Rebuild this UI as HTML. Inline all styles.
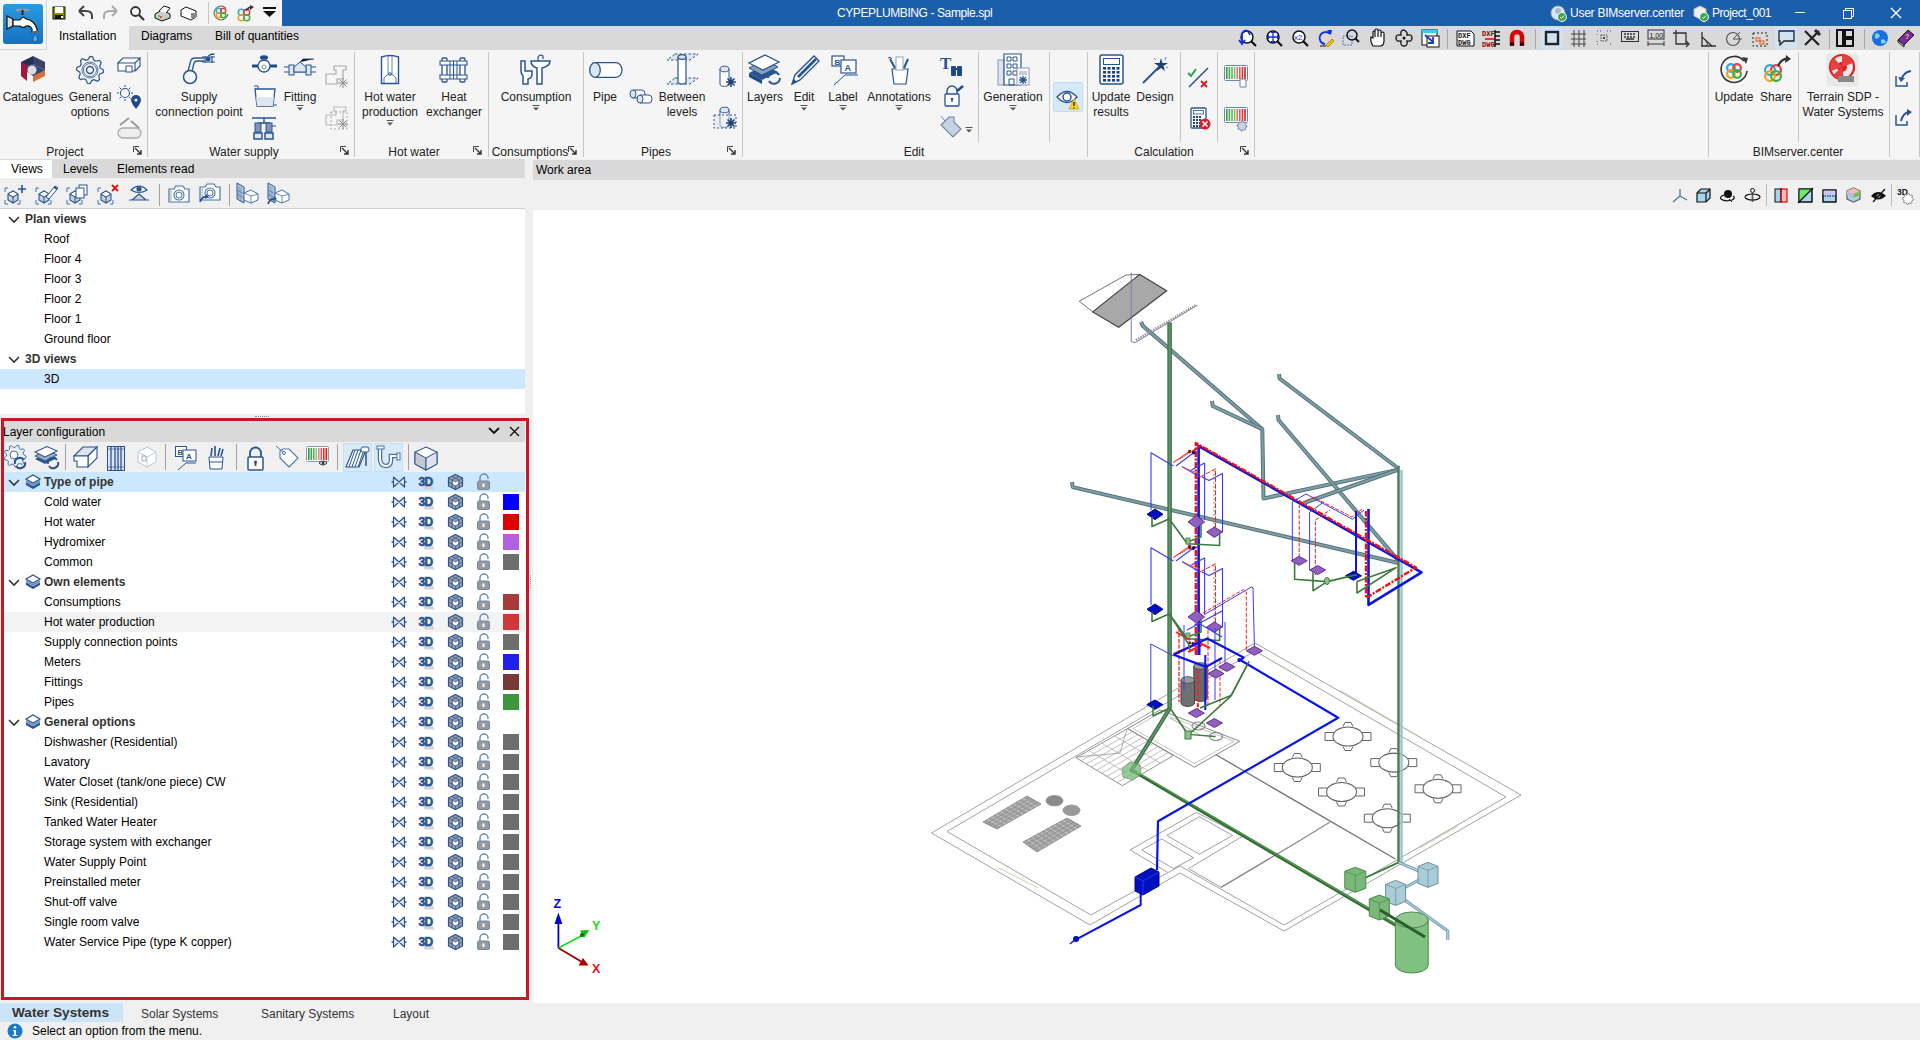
<!DOCTYPE html>
<html><head><meta charset="utf-8">
<style>
*{box-sizing:border-box;margin:0;padding:0}
html,body{width:1920px;height:1040px;overflow:hidden;background:#f0f0f0;font-family:"Liberation Sans",sans-serif;font-size:12px;color:#000}
.a{position:absolute}
.t{position:absolute;white-space:nowrap;line-height:14px}
.c{text-align:center}
svg{position:absolute;overflow:visible}
.g{color:#333}
.b{font-weight:bold}
</style></head><body>

<div class="a" style="left:0;top:0;width:1920px;height:26px;background:#1b5eab"></div>
<div class="a" style="left:0;top:0;width:282px;height:26px;background:#f5f5f5"></div>
<div class="a" style="left:0;top:0;width:47px;height:50px;background:#f5f5f5;border-right:1px solid #d4d4d4;border-bottom:1px solid #d4d4d4"></div>
<div class="t" style="left:837px;top:6px;color:#fff;font-size:12px;letter-spacing:-0.4px">CYPEPLUMBING - Sample.spl</div>
<div class="a" style="left:129px;top:26px;width:1791px;height:24px;background:#d9d9d9"></div>
<div class="a" style="left:47px;top:26px;width:82px;height:24px;background:#f5f5f5"></div>
<div class="t" style="left:59px;top:29px">Installation</div>
<div class="t" style="left:141px;top:29px">Diagrams</div>
<div class="t" style="left:215px;top:29px">Bill of quantities</div>
<div class="a" style="left:0;top:50px;width:1920px;height:109px;background:#f5f5f5"></div>

<svg style="left:3px;top:4px" width="40" height="40" viewBox="0 0 40 40"><defs><linearGradient id="ag" x1="0" y1="0" x2="0" y2="1"><stop offset="0" stop-color="#2a9be0"/><stop offset="1" stop-color="#1770c0"/></linearGradient></defs><rect x="0" y="0" width="40" height="40" rx="3" fill="url(#ag)"/><path d="M14,6 H25" stroke="#999" stroke-width="2.5" stroke-linecap="round"/><path d="M19.5,6 V11" stroke="#222" stroke-width="2"/><path d="M4,12 L10,15 V22 L4,25Z" fill="#ddd" stroke="#111" stroke-width="1.2"/><path d="M10,16 H17 Q20,11 23,15 Q31,16 34,25 V28 H29 V25 Q27,21 23,22 Q20,25 17,22 H10Z" fill="#fff" stroke="#111" stroke-width="1.2"/><path d="M29,28 H35" stroke="#666" stroke-width="2"/><path d="M32,30 Q36,35 34,37 Q32,39 30,37 Q29,35 32,30Z" fill="#4ab0e8" stroke="#105090" stroke-width="0.8"/></svg>
<svg style="left:52px;top:6px" width="14" height="14" viewBox="0 0 14 14"><rect x="0.5" y="0.5" width="13" height="13" fill="#111"/><rect x="1.5" y="1.5" width="11" height="11" fill="#8a8a00"/><rect x="3" y="1" width="8" height="6" fill="#fff"/><rect x="3" y="9" width="8" height="4" fill="#111"/><rect x="9" y="10" width="2" height="2" fill="#fff"/></svg>
<svg style="left:77px;top:5px" width="16" height="15" viewBox="0 0 16 15"><path d="M2,6 L7,1 M2,6 L7,11" stroke="#444" stroke-width="2" fill="none"/><path d="M2,6 H9 Q15,6 15,11 V14" fill="none" stroke="#444" stroke-width="2"/></svg>
<svg style="left:103px;top:5px" width="16" height="15" viewBox="0 0 16 15"><path d="M14,6 L9,1 M14,6 L9,11" stroke="#aaa" stroke-width="2" fill="none"/><path d="M14,6 H7 Q1,6 1,11 V14" fill="none" stroke="#aaa" stroke-width="2"/></svg>
<svg style="left:129px;top:5px" width="16" height="16" viewBox="0 0 16 16"><circle cx="6.5" cy="6.5" r="4.5" fill="none" stroke="#333" stroke-width="1.8"/><path d="M10,10 L15,15" stroke="#333" stroke-width="2.2"/></svg>
<svg style="left:154px;top:5px" width="17" height="16" viewBox="0 0 17 16"><path d="M1,9 L8,5 L16,9 V13 L8,16 L1,13Z" fill="#ccc" stroke="#111"/><path d="M5,6 L10,1 L16,3 L12,8" fill="#fff" stroke="#111"/><circle cx="5" cy="11" r="1" fill="#2c2"/><circle cx="7" cy="12" r="1" fill="#e22"/></svg>
<svg style="left:180px;top:6px" width="17" height="14" viewBox="0 0 17 14"><path d="M1,4 L6,1 L16,5 V11 L11,14 L1,10Z" fill="#fff" stroke="#111"/><rect x="11" y="7" width="5" height="5" fill="#888"/></svg>
<div class="a" style="left:208px;top:2px;width:1px;height:22px;background:#c6c6c6"></div>
<svg style="left:213px;top:5px" width="16" height="16" viewBox="0 0 16 16"><path d="M13,3 A7,7 0 1 0 15,9" fill="none" stroke="#555" stroke-width="1"/><circle cx="5.75" cy="5.75" r="2.5" fill="none" stroke="#2aa8e0" stroke-width="1.6"/><circle cx="10.25" cy="5.75" r="2.5" fill="none" stroke="#e04040" stroke-width="1.6"/><circle cx="5.75" cy="10.25" r="2.5" fill="none" stroke="#f0a020" stroke-width="1.6"/><circle cx="10.25" cy="10.25" r="2.5" fill="none" stroke="#40b040" stroke-width="1.6"/></svg>
<svg style="left:237px;top:5px" width="17" height="16" viewBox="0 0 17 16"><circle cx="4.3" cy="7.3" r="3.0" fill="none" stroke="#2aa8e0" stroke-width="1.6"/><circle cx="9.7" cy="7.3" r="3.0" fill="none" stroke="#e04040" stroke-width="1.6"/><circle cx="4.3" cy="12.7" r="3.0" fill="none" stroke="#f0a020" stroke-width="1.6"/><circle cx="9.7" cy="12.7" r="3.0" fill="none" stroke="#40b040" stroke-width="1.6"/><path d="M9,6 Q11,2 15,2" fill="none" stroke="#333" stroke-width="1.5"/><path d="M13,0 L17,2 L13,5Z" fill="#333"/></svg>
<svg style="left:263px;top:7px" width="13" height="10" viewBox="0 0 13 10"><rect x="0" y="0" width="13" height="2" fill="#111"/><path d="M0,4 H13 L6.5,10Z" fill="#111"/></svg>
<svg style="left:1550px;top:5px" width="17" height="17" viewBox="0 0 17 17"><circle cx="8" cy="8" r="7" fill="#dde6ee" stroke="#9ab"/><circle cx="8" cy="6" r="3" fill="#aab8c8"/><circle cx="12" cy="12" r="4.5" fill="#3aa84a" stroke="#fff"/><path d="M10,12 L11.5,13.5 L14,10.5" stroke="#fff" fill="none"/></svg>
<div class="t" style="left:1570px;top:6px;color:#fff;letter-spacing:-0.25px">User BIMserver.center</div>
<svg style="left:1692px;top:5px" width="17" height="17" viewBox="0 0 17 17"><path d="M2,4 L8,1 L14,4 V11 L8,14 L2,11Z" fill="#eee" stroke="#bbb"/><circle cx="12" cy="12" r="4.5" fill="#3aa84a" stroke="#fff"/><path d="M10,12 L11.5,13.5 L14,10.5" stroke="#fff" fill="none"/></svg>
<div class="t" style="left:1712px;top:6px;color:#fff;letter-spacing:-0.45px">Project_001</div>
<svg style="left:1795px;top:12px" width="10" height="2" viewBox="0 0 10 2"><rect width="10" height="1" fill="#fff"/></svg>
<svg style="left:1843px;top:8px" width="11" height="11" viewBox="0 0 11 11"><path d="M2.5,2.5 V0.5 H10.5 V8.5 H8.5" fill="none" stroke="#fff"/><rect x="0.5" y="2.5" width="8" height="8" fill="none" stroke="#fff"/></svg>
<svg style="left:1890px;top:7px" width="12" height="12" viewBox="0 0 12 12"><path d="M1,1 L11,11 M11,1 L1,11" stroke="#fff" stroke-width="1.4"/></svg>
<div class="a" style="left:1447px;top:29px;width:1px;height:20px;background:#a8a8a8"></div>
<div class="a" style="left:1535px;top:29px;width:1px;height:20px;background:#a8a8a8"></div>
<div class="a" style="left:1829px;top:29px;width:1px;height:20px;background:#a8a8a8"></div>
<div class="a" style="left:1864px;top:29px;width:1px;height:20px;background:#a8a8a8"></div>
<div class="a" style="left:1541px;top:27px;width:22px;height:22px;background:#cfe3f3;border-radius:2px"></div>
<div class="a" style="left:1775px;top:27px;width:22px;height:22px;background:#cfe3f3;border-radius:2px"></div>
<svg style="left:1239px;top:29px" width="18" height="18" viewBox="0 0 18 18"><circle cx="8" cy="8" r="6" fill="#fff" stroke="#111" stroke-width="1.5"/><path d="M12,12 L17,17" stroke="#111" stroke-width="2.2"/><path d="M3,4 Q8,-2 11,6 M3,4 V14 M0,11 L3,15 L6,11" fill="none" stroke="#1030e0" stroke-width="1.8"/></svg>
<svg style="left:1265px;top:29px" width="18" height="18" viewBox="0 0 18 18"><circle cx="8" cy="8" r="6" fill="#fff" stroke="#111" stroke-width="1.5"/><path d="M12,12 L17,17" stroke="#111" stroke-width="2.2"/><path d="M8,3 V13 M3,8 H13" stroke="#1030e0" stroke-width="1.3"/><path d="M6,4 L8,2 L10,4 M6,12 L8,14 L10,12 M4,6 L2,8 L4,10 M12,6 L14,8 L12,10" fill="#1030e0" stroke="#1030e0"/></svg>
<svg style="left:1291px;top:29px" width="18" height="18" viewBox="0 0 18 18"><circle cx="8" cy="8" r="6" fill="#fff" stroke="#111" stroke-width="1.5"/><path d="M12,12 L17,17" stroke="#111" stroke-width="2.2"/><text x="3" y="11" font-size="8" fill="#1030e0" font-family="Liberation Sans">x2</text></svg>
<svg style="left:1316px;top:29px" width="18" height="18" viewBox="0 0 18 18"><path d="M14,5 A6,6 0 1 0 9,15" fill="none" stroke="#1030e0" stroke-width="1.8"/><path d="M11,1 L16,1 L15,6Z" fill="#1030e0"/><path d="M10,16 L16,10 L18,12 L12,18Z" fill="#f0c020" stroke="#b80"/><path d="M4,17 H10" stroke="#111"/></svg>
<svg style="left:1342px;top:29px" width="18" height="18" viewBox="0 0 18 18"><rect x="1" y="7" width="9" height="9" fill="none" stroke="#3050e0" stroke-dasharray="1.5,1.5"/><circle cx="10" cy="6" r="5" fill="none" stroke="#111" stroke-width="1.5"/><path d="M13,9 L17,13" stroke="#111" stroke-width="2"/></svg>
<svg style="left:1369px;top:29px" width="17" height="18" viewBox="0 0 17 18"><path d="M4,17 Q1,12 2,8 L4,9 V3 Q5,1 6,3 V8 V1 Q7.5,-1 9,1 V8 V2 Q10.5,0 12,2 V8 V4 Q13.5,2 15,4 V12 Q15,17 11,17Z" fill="#fff" stroke="#111" stroke-width="1.2"/></svg>
<svg style="left:1395px;top:29px" width="18" height="18" viewBox="0 0 18 18"><path d="M9,1 Q13,3 12,6 Q17,5 17,9 Q17,13 12,12 Q13,17 9,17 Q5,17 6,12 Q1,13 1,9 Q1,5 6,6 Q5,1 9,1Z" fill="none" stroke="#111" stroke-width="1.3"/><circle cx="9" cy="9" r="1.5" fill="#111"/></svg>
<svg style="left:1421px;top:29px" width="19" height="19" viewBox="0 0 19 19"><rect x="1" y="1" width="15" height="15" fill="#fff" stroke="#111"/><rect x="1" y="1" width="15" height="3" fill="#30d0f0"/><rect x="6" y="7" width="12" height="11" fill="#fff" stroke="#111"/><path d="M4,6 L12,13 M12,8 V14 H7" fill="none" stroke="#1040c0" stroke-width="1.8"/></svg>
<svg style="left:1456px;top:30px" width="19" height="17" viewBox="0 0 19 17"><path d="M1,1 H15 L18,4 V16 H1Z" fill="#fff" stroke="#111"/><text x="2" y="8" font-size="7" font-weight="bold" font-family="Liberation Mono" fill="#111">DXF</text><text x="2" y="15" font-size="7" font-weight="bold" font-family="Liberation Mono" fill="#111">DWG</text></svg>
<svg style="left:1482px;top:29px" width="19" height="19" viewBox="0 0 19 19"><text x="0" y="7" font-size="7" font-weight="bold" font-family="Liberation Mono" fill="#900">DXF</text><text x="0" y="18" font-size="7" font-weight="bold" font-family="Liberation Mono" fill="#900">DWG</text><path d="M3,10 H12" stroke="#e00" stroke-width="1.5"/><path d="M13,1 V18 M13,3 H18 M13,7 H18 M13,11 H18 M13,15 H18" stroke="#111" stroke-width="1.5"/></svg>
<svg style="left:1509px;top:29px" width="16" height="19" viewBox="0 0 16 19"><path d="M3,17 V8 a5,5 0 0 1 10,0 V17" fill="none" stroke="#d00" stroke-width="4.5"/><path d="M1,15 H5 M11,15 H15" stroke="#111" stroke-width="3"/></svg>
<svg style="left:1544px;top:30px" width="16" height="16" viewBox="0 0 16 16"><rect x="2" y="2" width="12" height="12" fill="none" stroke="#222" stroke-width="2.4"/></svg>
<svg style="left:1570px;top:29px" width="17" height="18" viewBox="0 0 17 18"><path d="M1,5 H16 M1,10 H16 M1,15 H16 M4,1 V18 M9,1 V18 M14,1 V18" stroke="#444" stroke-width="1"/></svg>
<svg style="left:1596px;top:30px" width="16" height="16" viewBox="0 0 16 16"><path d="M1,1h1M14,1h1M1,14h1M14,14h1M4,1h1M11,1h1M1,4v1M1,11v1" stroke="#555"/><rect x="5" y="5" width="6" height="6" fill="none" stroke="#444" stroke-dasharray="1.5,1"/><circle cx="8" cy="8" r="1" fill="#111"/></svg>
<svg style="left:1621px;top:31px" width="18" height="12" viewBox="0 0 18 12"><rect x="0.5" y="0.5" width="17" height="10" fill="none" stroke="#333"/><path d="M3,3h2M6,3h2M9,3h2M12,3h2M3,6h2M6,6h2M9,6h2M12,6h2M5,8h8" stroke="#333" stroke-width="1.3"/></svg>
<svg style="left:1647px;top:29px" width="18" height="18" viewBox="0 0 18 18"><rect x="1" y="1" width="16" height="9" fill="none" stroke="#333"/><text x="2.5" y="8.5" font-size="7" font-family="Liberation Sans" fill="#111">1.00</text><path d="M1,15 H17 M1,12 V17 M17,12 V17" stroke="#333"/></svg>
<svg style="left:1672px;top:29px" width="19" height="19" viewBox="0 0 19 19"><path d="M4,1 V15 H16 M1,4 H4 M14,12 L17,15 L14,18" fill="none" stroke="#333" stroke-width="1.3"/><path d="M4,4 H14 V15" fill="none" stroke="#333" stroke-width="1.3"/></svg>
<svg style="left:1699px;top:29px" width="18" height="18" viewBox="0 0 18 18"><path d="M2,17 H17 M3,3 V17 M3,8 L13,17" stroke="#333" stroke-width="1.3"/><path d="M8,17 A5,5 0 0 0 7,12" fill="none" stroke="#333"/></svg>
<svg style="left:1725px;top:29px" width="18" height="18" viewBox="0 0 18 18"><circle cx="8" cy="10" r="6.5" fill="none" stroke="#555" stroke-width="1.2"/><path d="M8,10 L15,3 M8,10 H17" stroke="#555"/></svg>
<svg style="left:1751px;top:29px" width="19" height="19" viewBox="0 0 19 19"><rect x="2" y="4" width="14" height="13" fill="none" stroke="#222" stroke-dasharray="2,2"/><rect x="5" y="9" width="4" height="3" fill="none" stroke="#e05a10"/><rect x="9" y="12" width="4" height="3" fill="none" stroke="#e05a10"/></svg>
<svg style="left:1778px;top:30px" width="17" height="16" viewBox="0 0 17 16"><path d="M1,1 H16 V11 H6 L2,15 V11 H1Z" fill="none" stroke="#222" stroke-width="1.3"/></svg>
<svg style="left:1803px;top:29px" width="18" height="18" viewBox="0 0 18 18"><path d="M2,16 L16,2 M2,2 L16,16" stroke="#222" stroke-width="2.2"/><path d="M12,1 L17,6" stroke="#222" stroke-width="3"/></svg>
<svg style="left:1836px;top:29px" width="18" height="18" viewBox="0 0 18 18"><rect x="1" y="1" width="6" height="16" fill="none" stroke="#111" stroke-width="2"/><rect x="9" y="1" width="8" height="7" fill="none" stroke="#111" stroke-width="2"/><rect x="9" y="10" width="8" height="7" fill="none" stroke="#111" stroke-width="2"/></svg>
<svg style="left:1871px;top:29px" width="18" height="18" viewBox="0 0 18 18"><circle cx="9" cy="9" r="8" fill="#1a6fe0"/><path d="M4,5 Q8,3 9,7 Q7,11 4,9Z M10,11 Q14,9 15,13 Q12,16 10,14Z" fill="#7fd0ff"/></svg>
<svg style="left:1897px;top:29px" width="18" height="18" viewBox="0 0 18 18"><path d="M1,11 L11,1 L17,6 L7,16Z" fill="#7a2aa0" stroke="#111"/><path d="M1,11 L7,16 V18 L1,13Z" fill="#ddd" stroke="#111"/><text x="8" y="10" font-size="7" font-weight="bold" fill="#f0d030" font-family="Liberation Sans">?</text></svg>
<div class="a" style="left:147px;top:52px;width:1px;height:105px;background:#c6c6c6"></div>
<div class="a" style="left:354px;top:52px;width:1px;height:105px;background:#c6c6c6"></div>
<div class="a" style="left:488px;top:52px;width:1px;height:105px;background:#c6c6c6"></div>
<div class="a" style="left:583px;top:52px;width:1px;height:105px;background:#c6c6c6"></div>
<div class="a" style="left:742px;top:52px;width:1px;height:105px;background:#c6c6c6"></div>
<div class="a" style="left:1087px;top:52px;width:1px;height:105px;background:#c6c6c6"></div>
<div class="a" style="left:1254px;top:52px;width:1px;height:105px;background:#c6c6c6"></div>
<div class="a" style="left:1708px;top:52px;width:1px;height:105px;background:#c6c6c6"></div>
<div class="a" style="left:1889px;top:52px;width:1px;height:105px;background:#c6c6c6"></div>
<div class="a" style="left:1919px;top:52px;width:1px;height:105px;background:#c6c6c6"></div>
<div class="a" style="left:978px;top:52px;width:1px;height:90px;background:#c6c6c6"></div>
<div class="a" style="left:1049px;top:52px;width:1px;height:90px;background:#c6c6c6"></div>
<div class="a" style="left:1180px;top:52px;width:1px;height:90px;background:#c6c6c6"></div>
<div class="a" style="left:1217px;top:52px;width:1px;height:90px;background:#c6c6c6"></div>
<div class="a" style="left:1798px;top:52px;width:1px;height:90px;background:#c6c6c6"></div>
<div class="t c" style="left:-35px;top:145px;width:200px;color:#222;">Project</div>
<div class="t c" style="left:144px;top:145px;width:200px;color:#222;">Water supply</div>
<div class="t c" style="left:314px;top:145px;width:200px;color:#222;">Hot water</div>
<div class="t c" style="left:430px;top:145px;width:200px;color:#222;">Consumptions</div>
<div class="t c" style="left:556px;top:145px;width:200px;color:#222;">Pipes</div>
<div class="t c" style="left:814px;top:145px;width:200px;color:#222;">Edit</div>
<div class="t c" style="left:1064px;top:145px;width:200px;color:#222;">Calculation</div>
<div class="t c" style="left:1698px;top:145px;width:200px;color:#222;">BIMserver.center</div>
<svg style="left:133px;top:146px" width="9" height="9" viewBox="0 0 9 9"><path d="M0.5,6 V0.5 H6" fill="none" stroke="#444"/><path d="M2,2 L7.5,7.5 M4,8 H8 V4" fill="none" stroke="#333" stroke-width="1.4"/></svg>
<svg style="left:340px;top:146px" width="9" height="9" viewBox="0 0 9 9"><path d="M0.5,6 V0.5 H6" fill="none" stroke="#444"/><path d="M2,2 L7.5,7.5 M4,8 H8 V4" fill="none" stroke="#333" stroke-width="1.4"/></svg>
<svg style="left:473px;top:146px" width="9" height="9" viewBox="0 0 9 9"><path d="M0.5,6 V0.5 H6" fill="none" stroke="#444"/><path d="M2,2 L7.5,7.5 M4,8 H8 V4" fill="none" stroke="#333" stroke-width="1.4"/></svg>
<svg style="left:568px;top:146px" width="9" height="9" viewBox="0 0 9 9"><path d="M0.5,6 V0.5 H6" fill="none" stroke="#444"/><path d="M2,2 L7.5,7.5 M4,8 H8 V4" fill="none" stroke="#333" stroke-width="1.4"/></svg>
<svg style="left:727px;top:146px" width="9" height="9" viewBox="0 0 9 9"><path d="M0.5,6 V0.5 H6" fill="none" stroke="#444"/><path d="M2,2 L7.5,7.5 M4,8 H8 V4" fill="none" stroke="#333" stroke-width="1.4"/></svg>
<svg style="left:1240px;top:146px" width="9" height="9" viewBox="0 0 9 9"><path d="M0.5,6 V0.5 H6" fill="none" stroke="#444"/><path d="M2,2 L7.5,7.5 M4,8 H8 V4" fill="none" stroke="#333" stroke-width="1.4"/></svg>
<div class="t c" style="left:-67px;top:90px;width:200px;color:#222;">Catalogues</div>
<div class="t c" style="left:-10px;top:90px;width:200px;color:#222;">General</div>
<div class="t c" style="left:-10px;top:105px;width:200px;color:#222;">options</div>
<div class="t c" style="left:99px;top:90px;width:200px;color:#222;">Supply</div>
<div class="t c" style="left:99px;top:105px;width:200px;color:#222;">connection point</div>
<div class="t c" style="left:200px;top:90px;width:200px;color:#222;">Fitting</div>
<div class="t c" style="left:290px;top:90px;width:200px;color:#222;">Hot water</div>
<div class="t c" style="left:290px;top:105px;width:200px;color:#222;">production</div>
<div class="t c" style="left:354px;top:90px;width:200px;color:#222;">Heat</div>
<div class="t c" style="left:354px;top:105px;width:200px;color:#222;">exchanger</div>
<div class="t c" style="left:436px;top:90px;width:200px;color:#222;">Consumption</div>
<div class="t c" style="left:505px;top:90px;width:200px;color:#222;">Pipe</div>
<div class="t c" style="left:582px;top:90px;width:200px;color:#222;">Between</div>
<div class="t c" style="left:582px;top:105px;width:200px;color:#222;">levels</div>
<div class="t c" style="left:665px;top:90px;width:200px;color:#222;">Layers</div>
<div class="t c" style="left:704px;top:90px;width:200px;color:#222;">Edit</div>
<div class="t c" style="left:743px;top:90px;width:200px;color:#222;">Label</div>
<div class="t c" style="left:799px;top:90px;width:200px;color:#222;">Annotations</div>
<div class="t c" style="left:913px;top:90px;width:200px;color:#222;">Generation</div>
<div class="t c" style="left:1011px;top:90px;width:200px;color:#222;">Update</div>
<div class="t c" style="left:1011px;top:105px;width:200px;color:#222;">results</div>
<div class="t c" style="left:1055px;top:90px;width:200px;color:#222;">Design</div>
<div class="t c" style="left:1634px;top:90px;width:200px;color:#222;">Update</div>
<div class="t c" style="left:1676px;top:90px;width:200px;color:#222;">Share</div>
<div class="t c" style="left:1743px;top:90px;width:200px;color:#222;">Terrain SDP -</div>
<div class="t c" style="left:1743px;top:105px;width:200px;color:#222;">Water Systems</div>
<svg style="left:296px;top:105px" width="8" height="6" viewBox="0 0 8 6"><path d="M0.5,0.5 H7.5" stroke="#555" stroke-width="1"/><path d="M1,2.5 H7 L4,5.5 Z" fill="#555"/></svg>
<svg style="left:386px;top:120px" width="8" height="6" viewBox="0 0 8 6"><path d="M0.5,0.5 H7.5" stroke="#555" stroke-width="1"/><path d="M1,2.5 H7 L4,5.5 Z" fill="#555"/></svg>
<svg style="left:532px;top:105px" width="8" height="6" viewBox="0 0 8 6"><path d="M0.5,0.5 H7.5" stroke="#555" stroke-width="1"/><path d="M1,2.5 H7 L4,5.5 Z" fill="#555"/></svg>
<svg style="left:800px;top:105px" width="8" height="6" viewBox="0 0 8 6"><path d="M0.5,0.5 H7.5" stroke="#555" stroke-width="1"/><path d="M1,2.5 H7 L4,5.5 Z" fill="#555"/></svg>
<svg style="left:839px;top:105px" width="8" height="6" viewBox="0 0 8 6"><path d="M0.5,0.5 H7.5" stroke="#555" stroke-width="1"/><path d="M1,2.5 H7 L4,5.5 Z" fill="#555"/></svg>
<svg style="left:895px;top:105px" width="8" height="6" viewBox="0 0 8 6"><path d="M0.5,0.5 H7.5" stroke="#555" stroke-width="1"/><path d="M1,2.5 H7 L4,5.5 Z" fill="#555"/></svg>
<svg style="left:1009px;top:105px" width="8" height="6" viewBox="0 0 8 6"><path d="M0.5,0.5 H7.5" stroke="#555" stroke-width="1"/><path d="M1,2.5 H7 L4,5.5 Z" fill="#555"/></svg>
<svg style="left:965px;top:127px" width="8" height="6" viewBox="0 0 8 6"><path d="M0.5,0.5 H7.5" stroke="#555" stroke-width="1"/><path d="M1,2.5 H7 L4,5.5 Z" fill="#555"/></svg>
<svg style="left:20px;top:55px" width="26" height="28" viewBox="0 0 26 28"><path d="M13,1 L25,7 V15 L13,9 Z" fill="#39436a"/><path d="M1,7 L13,1 V9 L7,12 V24 Z" fill="#233156"/><path d="M1,7 L7,10 V26 L1,21 Z" fill="#a3163c"/><path d="M13,13 L25,15 V21 L13,27 Z" fill="#d9703c"/><path d="M7,10 L13,9 L25,15 L13,21 L7,17 Z" fill="#2f4a78"/><circle cx="12" cy="15" r="4.5" fill="#ddd"/></svg>
<svg style="left:74px;top:54px" width="32" height="32" viewBox="0 0 32 32"><polygon points="29.50,16.00 29.24,18.63 25.73,20.03 24.76,21.85 25.55,25.55 23.50,27.22 20.03,25.73 18.05,26.33 16.00,29.50 13.37,29.24 11.97,25.73 10.15,24.76 6.45,25.55 4.78,23.50 6.27,20.03 5.67,18.05 2.50,16.00 2.76,13.37 6.27,11.97 7.24,10.15 6.45,6.45 8.50,4.78 11.97,6.27 13.95,5.67 16.00,2.50 18.63,2.76 20.03,6.27 21.85,7.24 25.55,6.45 27.22,8.50 25.73,11.97 26.33,13.95" fill="#f5f5f5" stroke="#2a5490" stroke-width="1.2"/><circle cx="16" cy="16" r="8" fill="none" stroke="#2a5490" stroke-width="0.8"/><circle cx="16" cy="16" r="6.5" fill="none" stroke="#2a5490" stroke-width="0.8"/><circle cx="16" cy="16" r="3.5" fill="none" stroke="#2a5490" stroke-width="1.4"/></svg>
<svg style="left:117px;top:57px" width="24" height="17" viewBox="0 0 24 17"><path d="M1,6 L6,1 H23 L18,6 Z M1,6 H18 V14 H1 Z M18,6 L23,1 V9 L18,14" fill="#fff" stroke="#2a5490" stroke-width="1.1"/><rect x="9" y="9" width="6" height="6" fill="#fff" stroke="#2a5490"/></svg>
<svg style="left:117px;top:85px" width="25" height="24" viewBox="0 0 25 24"><circle cx="8" cy="8" r="4.5" fill="none" stroke="#2a5490" stroke-width="1.1"/><path d="M8,0 V2 M8,14 V16 M0,8 H2 M14,8 H16 M2.5,2.5 L4,4 M12,12 L13.5,13.5 M2.5,13.5 L4,12 M12,4 L13.5,2.5" stroke="#2a5490"/><path d="M19,10 a5,5 0 0 1 5,5 c0,3 -5,9 -5,9 c0,0 -5,-6 -5,-9 a5,5 0 0 1 5,-5Z" fill="#1f4a8a"/><circle cx="19" cy="15" r="1.6" fill="#fff"/></svg>
<svg style="left:117px;top:117px" width="24" height="22" viewBox="0 0 24 22"><path d="M1,16 a5,5 0 0 1 5,-5 H19 a5,5 0 0 1 0,10 H6 a5,5 0 0 1 -5,-5Z" fill="#eee" stroke="#aaa" stroke-width="1.3"/><path d="M3,8 L12,1 M14,4 L22,11" stroke="#999" stroke-width="2"/></svg>
<svg style="left:182px;top:54px" width="34" height="31" viewBox="0 0 34 31"><circle cx="8" cy="23" r="6.5" fill="#f5f5f5" stroke="#2a5490" stroke-width="1.5"/><path d="M6,17 L9,6 Q10,4 13,4 H22 M10,17 L12,9 Q13,7 15,7 H22" fill="none" stroke="#2a5490" stroke-width="1.3"/><path d="M20,3 H33 M20,8 H33 M23,2 V9 M30,2 V9" stroke="#2a5490" stroke-width="1.2"/><circle cx="26" cy="5" r="2.5" fill="#2a5490"/><path d="M26,2 L29,0 H33" stroke="#2a5490"/></svg>
<svg style="left:252px;top:55px" width="25" height="18" viewBox="0 0 25 18"><ellipse cx="12" cy="2.5" rx="4" ry="2.3" fill="#1f4a8a"/><path d="M12,5 V7" stroke="#2a5490"/><path d="M0,11 H25" stroke="#1f4a8a" stroke-width="3"/><circle cx="12" cy="11" r="6" fill="#fff" stroke="#2a5490" stroke-width="1.3"/><circle cx="12" cy="12" r="2" fill="none" stroke="#2a5490" stroke-width="0.6"/></svg>
<svg style="left:253px;top:85px" width="24" height="23" viewBox="0 0 24 23"><path d="M1,1 H5 V4" fill="none" stroke="#2a5490"/><path d="M2,4 H22 L20,21 H4 Z" fill="#fff" stroke="#2a5490" stroke-width="1.3"/><path d="M3,12 H21 L20,21 H4 Z" fill="#dde5ef"/><path d="M20,20 H24" stroke="#2a5490"/></svg>
<svg style="left:252px;top:117px" width="24" height="22" viewBox="0 0 24 22"><path d="M0,1 H24 M12,1 V6 M6,6 H18" stroke="#2a5490" stroke-width="1.5"/><rect x="3" y="6" width="6" height="9" fill="#7c95b8" stroke="#2a5490"/><rect x="14" y="6" width="6" height="9" fill="#7c95b8" stroke="#2a5490"/><path d="M20,9 H24" stroke="#2a5490"/><rect x="2" y="16" width="8" height="6" fill="#dde5ef" stroke="#2a5490" stroke-width="1.5"/><rect x="13" y="16" width="8" height="6" fill="#dde5ef" stroke="#2a5490" stroke-width="1.5"/></svg>
<svg style="left:284px;top:59px" width="32" height="17" viewBox="0 0 32 17"><path d="M0,8 H32 M0,13 H32" stroke="#2a5490" stroke-width="1.2"/><rect x="5" y="6" width="5" height="10" fill="#dde5ef" stroke="#2a5490"/><rect x="22" y="6" width="5" height="10" fill="#dde5ef" stroke="#2a5490"/><path d="M10,8 L16,3 L22,8 V13 H10 Z" fill="#dde5ef" stroke="#2a5490"/><path d="M16,3 L19,0 H30" stroke="#2a5490"/></svg>
<svg style="left:324px;top:65px" width="24" height="24" viewBox="0 0 24 24"><path d="M10,1 H22 V5 H19 V14 H13 V19 H2 V9 H12 V5 H10Z" fill="#f5f5f5" stroke="#aaa" stroke-width="1.2"/><path d="M19,13 L19,23 M14,18 H24 M15.5,14.5 L22.5,21.5 M22.5,14.5 L15.5,21.5" stroke="#888"/></svg>
<svg style="left:324px;top:106px" width="24" height="24" viewBox="0 0 24 24"><path d="M10,1 H22 V5 H19 V14 H13 V19 H2 V9 H12 V5 H10Z" fill="#f5f5f5" stroke="#bbb" stroke-width="1.2"/><rect x="7" y="6" width="16" height="17" fill="none" stroke="#aaa" stroke-dasharray="2,2"/><path d="M19,13 L19,23 M14,18 H24 M15.5,14.5 L22.5,21.5 M22.5,14.5 L15.5,21.5" stroke="#888"/></svg>
<svg style="left:380px;top:54px" width="20" height="31" viewBox="0 0 20 31"><path d="M1.5,3 Q10,0 18.5,3 V29.5 H1.5 Z" fill="#fff" stroke="#2a5490" stroke-width="1.4"/><path d="M8,2 V20 M12,2 V20" stroke="#2a5490" stroke-width="0.7"/><path d="M4,29 V24 Q10,16 16,24 V29" fill="none" stroke="#2a5490" stroke-width="0.8"/><circle cx="10" cy="20" r="1.5" fill="none" stroke="#2a5490" stroke-width="0.7"/></svg>
<svg style="left:440px;top:57px" width="28" height="26" viewBox="0 0 28 26"><rect x="2" y="1" width="5" height="24" rx="1" fill="#fff" stroke="#2a5490" stroke-width="1.3"/><rect x="20" y="1" width="5" height="24" rx="1" fill="#fff" stroke="#2a5490" stroke-width="1.3"/><path d="M0,4 H27 V8 H0 Z M0,18 H27 V22 H0Z" fill="#fff" stroke="#2a5490" stroke-width="1.1"/><path d="M10,4 V22 M13.5,4 V22 M17,4 V22" stroke="#2a5490" stroke-width="1"/></svg>
<svg style="left:520px;top:54px" width="31" height="31" viewBox="0 0 31 31"><path d="M1,7 H5 V17 H12 V20 Q12,24 8,25 V30 H3 V22 Q1,20 1,17 Z" fill="#fff" stroke="#2a5490" stroke-width="1.5"/><path d="M11,7 H30 Q30,12 22,14 V30 H17 V14 Q11,12 11,7Z" fill="#fff" stroke="#2a5490" stroke-width="1.5"/><path d="M18,7 V3 Q20,0 23,2 V5" fill="none" stroke="#2a5490" stroke-width="1.2"/></svg>
<svg style="left:589px;top:62px" width="34" height="16" viewBox="0 0 34 16"><path d="M6,0.7 H27 A6,7.3 0 0 1 27,15.3 H6" fill="#fff" stroke="#2a5490" stroke-width="1.3"/><ellipse cx="6" cy="8" rx="5.3" ry="7.3" fill="#dde5ef" stroke="#2a5490" stroke-width="1.3"/></svg>
<svg style="left:629px;top:89px" width="25" height="15" viewBox="0 0 25 15"><path d="M4,1 H13 A3,4 0 0 1 13,9 H4" fill="#fff" stroke="#2a5490"/><ellipse cx="4" cy="5" rx="3" ry="4" fill="#dde5ef" stroke="#2a5490"/><path d="M11,6 H20 A3,4 0 0 1 20,14 H11" fill="#fff" stroke="#2a5490"/><ellipse cx="11" cy="10" rx="3" ry="4" fill="#dde5ef" stroke="#2a5490"/></svg>
<svg style="left:666px;top:53px" width="33" height="34" viewBox="0 0 33 34"><path d="M9,1 H32 L24,7 H1 Z" fill="#dde5ef" stroke="#2a5490" stroke-dasharray="2.5,2"/><path d="M9,25 H32 L24,31 H1 Z" fill="#dde5ef" stroke="#2a5490" stroke-dasharray="2.5,2"/><path d="M12,4 V29 A4,2 0 0 0 20,29 V4" fill="#fff" stroke="#2a5490" stroke-width="1.2"/><ellipse cx="16" cy="4" rx="4" ry="2.3" fill="#dde5ef" stroke="#2a5490" stroke-width="1.2"/></svg>
<svg style="left:718px;top:65px" width="18" height="24" viewBox="0 0 18 24"><path d="M2,4 V19 A4.5,2.3 0 0 0 11,19 V4" fill="#fff" stroke="#2a5490"/><ellipse cx="6.5" cy="4" rx="4.5" ry="2.8" fill="#dde5ef" stroke="#2a5490"/><path d="M13,12 V22 M8,17 H18 M9.5,13.5 L16.5,20.5 M16.5,13.5 L9.5,20.5" stroke="#1f3f7a" stroke-width="1.6"/></svg>
<svg style="left:718px;top:106px" width="18" height="24" viewBox="0 0 18 24"><path d="M2,4 V19 A4.5,2.3 0 0 0 11,19 V4" fill="#fff" stroke="#2a5490"/><ellipse cx="6.5" cy="4" rx="4.5" ry="2.8" fill="#dde5ef" stroke="#2a5490"/><rect x="-4" y="9" width="22" height="13" fill="#dde5ef" fill-opacity="0.5" stroke="#2a5490" stroke-dasharray="2,2"/><path d="M13,12 V22 M8,17 H18 M9.5,13.5 L16.5,20.5 M16.5,13.5 L9.5,20.5" stroke="#1f3f7a" stroke-width="1.6"/></svg>
<svg style="left:748px;top:54px" width="33" height="32" viewBox="0 0 33 32"><path d="M1,19 L14,26 L30,18 L17,11 Z" fill="#2a5490"/><path d="M1,14 L14,21 L30,13 L17,6 Z" fill="#8a9dba" stroke="#2a5490"/><path d="M1,9 L15,16 L31,8 L17,1 Z" fill="#fff" stroke="#2a5490" stroke-width="1.3"/><path d="M1,19 V23 L14,30 V26" fill="#1f4a8a"/><path d="M20,24 a6,6 0 0 1 11,-3 M32,24 a6,6 0 0 1 -11,3" fill="none" stroke="#2a5490" stroke-width="2"/></svg>
<svg style="left:790px;top:55px" width="30" height="31" viewBox="0 0 30 31"><path d="M2,29 L5,20 L24,1 L29,6 L10,25 Z" fill="#fff" stroke="#2a5490" stroke-width="1.4"/><path d="M7,21 L25,3 L27,5 L9,23Z" fill="#2a5490"/><path d="M2,29 L4,24 L7,27Z" fill="#2a5490"/></svg>
<svg style="left:831px;top:55px" width="27" height="31" viewBox="0 0 27 31"><rect x="1" y="1" width="12" height="10" fill="#fff" stroke="#2a5490" stroke-width="1.2"/><rect x="10" y="5" width="15" height="13" fill="#fff" stroke="#2a5490" stroke-width="1.2"/><text x="3.5" y="9.5" font-size="8" font-weight="bold" fill="#2a5490" font-family="Liberation Sans">B</text><text x="13.5" y="15.5" font-size="9" font-weight="bold" fill="#2a5490" font-family="Liberation Sans">A</text><path d="M27,20 H14 L3,30" fill="none" stroke="#2a5490"/></svg>
<svg style="left:886px;top:56px" width="26" height="29" viewBox="0 0 26 29"><path d="M6,13 H22 L20,28 H8 Z" fill="#fff" stroke="#2a5490" stroke-width="1.2"/><rect x="10" y="1" width="7" height="13" fill="#fff" stroke="#8aa"/><path d="M4,3 L9,12 M22,3 L18,12" stroke="#2a5490" stroke-width="2"/><path d="M2,2 Q4,0 6,3" fill="none" stroke="#2a5490"/></svg>
<svg style="left:940px;top:55px" width="24" height="23" viewBox="0 0 24 23"><text x="0" y="14" font-size="17" font-family="Liberation Serif" fill="#2a5490" font-weight="bold">T</text><rect x="11" y="11" width="5" height="10" rx="1" fill="#1f4a8a"/><rect x="17" y="11" width="5" height="10" rx="1" fill="#1f4a8a"/><path d="M15,14 H18" stroke="#1f4a8a" stroke-width="2"/></svg>
<svg style="left:944px;top:85px" width="20" height="23" viewBox="0 0 20 23"><path d="M3,9 V6 a5,5 0 0 1 10,0 V9" fill="none" stroke="#2a5490" stroke-width="1.4"/><rect x="1" y="9" width="14" height="12" rx="1" fill="#fff" stroke="#2a5490" stroke-width="1.3"/><circle cx="8" cy="14" r="1.3" fill="#2a5490"/><path d="M8,14 V17" stroke="#2a5490" stroke-width="1.3"/><path d="M13,6 L19,1" stroke="#1f4a8a" stroke-width="2.5"/></svg>
<svg style="left:940px;top:116px" width="22" height="23" viewBox="0 0 22 23"><path d="M1,9 L9,1 H14 V6 L21,13 L13,21 Z" transform="rotate(0)" fill="#c9d2e0" stroke="#6d86aa" stroke-width="1.1"/><path d="M1,0 L5,5" stroke="#6d86aa"/></svg>
<svg style="left:997px;top:53px" width="33" height="33" viewBox="0 0 33 33"><rect x="1" y="7" width="6" height="25" fill="#dfe4ec" stroke="#8a9ab5"/><path d="M7,1 H24 V32 H7Z" fill="#fff" stroke="#2a5490" stroke-width="1.2"/><path d="M10,4 h4 v4 h-4z M16,4 h4 v4 h-4z M10,11 h4 v4 h-4z M16,11 h4 v4 h-4z M10,18 h4 v4 h-4z M16,18 h4 v4 h-4z M12,26 h5 v6 h-5z" fill="none" stroke="#2a5490"/><rect x="20" y="15" width="12" height="17" fill="#fff" stroke="#8a9ab5"/><path d="M22,19 H30 M22,21 H30" stroke="#8a9ab5"/><path d="M26,23 V31 M22,27 H30 M23,24 L29,30 M29,24 L23,30" stroke="#2a5490" stroke-width="1.3"/></svg>
<div class="a" style="left:1053px;top:82px;width:30px;height:30px;background:#d7e9f7;border:1px solid #c0dcf2;border-radius:2px"></div>
<svg style="left:1056px;top:88px" width="24" height="22" viewBox="0 0 24 22"><path d="M1,9 Q11,-2 21,9 Q11,20 1,9Z" fill="#fff" stroke="#2a5490" stroke-width="1.3"/><circle cx="11" cy="9" r="4" fill="none" stroke="#2a5490" stroke-width="1.5"/><path d="M13,21 L18,11 L23,21Z" fill="#f6d43a" stroke="#e0b000"/><path d="M18,14 V18 M18,19.5 V20.5" stroke="#222" stroke-width="1.4"/></svg>
<svg style="left:1099px;top:54px" width="25" height="31" viewBox="0 0 25 31"><rect x="1" y="1" width="23" height="29" rx="2" fill="#fff" stroke="#2a5490" stroke-width="1.5"/><rect x="4.5" y="4.5" width="16" height="6" fill="#fff" stroke="#2a5490"/><rect x="4.0" y="13" width="3" height="2.6" fill="#1f3f7a"/><rect x="8.5" y="13" width="3" height="2.6" fill="#1f3f7a"/><rect x="13.0" y="13" width="3" height="2.6" fill="#1f3f7a"/><rect x="17.5" y="13" width="3" height="2.6" fill="#1f3f7a"/><rect x="4.0" y="17" width="3" height="2.6" fill="#1f3f7a"/><rect x="8.5" y="17" width="3" height="2.6" fill="#1f3f7a"/><rect x="13.0" y="17" width="3" height="2.6" fill="#1f3f7a"/><rect x="17.5" y="17" width="3" height="2.6" fill="#1f3f7a"/><rect x="4.0" y="21" width="3" height="2.6" fill="#1f3f7a"/><rect x="8.5" y="21" width="3" height="2.6" fill="#1f3f7a"/><rect x="13.0" y="21" width="3" height="2.6" fill="#1f3f7a"/><rect x="17.5" y="21" width="3" height="2.6" fill="#1f3f7a"/><rect x="4.0" y="25" width="3" height="2.6" fill="#1f3f7a"/><rect x="8.5" y="25" width="3" height="2.6" fill="#1f3f7a"/><rect x="13.0" y="25" width="3" height="2.6" fill="#1f3f7a"/><rect x="17.5" y="25" width="3" height="2.6" fill="#1f3f7a"/></svg>
<svg style="left:1142px;top:56px" width="27" height="28" viewBox="0 0 27 28"><path d="M1,27 L17,11" stroke="#2a5490" stroke-width="2"/><path d="M19,2 L20.5,7 L26,7 L21.5,10 L23,15 L19,12 L15,15 L16.5,10 L12,7 L17.5,7 Z" fill="#1f3f7a"/><path d="M12,2 L14,4 M24,1 L23,4 M26,12 L24,11" stroke="#4a8ad0"/></svg>
<svg style="left:1187px;top:66px" width="23" height="22" viewBox="0 0 23 22"><path d="M1,7 L4,10 L9,3" fill="none" stroke="#2aa54a" stroke-width="2"/><path d="M2,21 L21,2" stroke="#2a5490" stroke-width="1.6"/><path d="M14,15 L20,21 M20,15 L14,21" stroke="#d8202a" stroke-width="2"/></svg>
<svg style="left:1190px;top:107px" width="21" height="23" viewBox="0 0 21 23"><rect x="1" y="1" width="15" height="20" rx="1" fill="#fff" stroke="#2a5490" stroke-width="1.3"/><rect x="3.5" y="3.5" width="10" height="3.5" fill="none" stroke="#2a5490" stroke-width="0.8"/><rect x="3" y="9" width="2" height="2" fill="#1f3f7a"/><rect x="6" y="9" width="2" height="2" fill="#1f3f7a"/><rect x="9" y="9" width="2" height="2" fill="#1f3f7a"/><rect x="3" y="12" width="2" height="2" fill="#1f3f7a"/><rect x="6" y="12" width="2" height="2" fill="#1f3f7a"/><rect x="9" y="12" width="2" height="2" fill="#1f3f7a"/><rect x="3" y="15" width="2" height="2" fill="#1f3f7a"/><rect x="6" y="15" width="2" height="2" fill="#1f3f7a"/><rect x="9" y="15" width="2" height="2" fill="#1f3f7a"/><rect x="3" y="18" width="2" height="2" fill="#1f3f7a"/><rect x="6" y="18" width="2" height="2" fill="#1f3f7a"/><rect x="9" y="18" width="2" height="2" fill="#1f3f7a"/><circle cx="15" cy="17" r="5.5" fill="#d8202a"/><path d="M12.5,14.5 L17.5,19.5 M17.5,14.5 L12.5,19.5" stroke="#fff" stroke-width="1.5"/></svg>
<svg style="left:1224px;top:65px" width="24" height="24" viewBox="0 0 24 24"><rect x="0.5" y="0.5" width="23" height="15" rx="1" fill="#fff" stroke="#6d86aa"/><rect x="2.0" y="2" width="1.6" height="12" fill="#3a9a3a"/><rect x="4.6" y="2" width="1.6" height="12" fill="#4aa84a"/><rect x="7.2" y="2" width="1.6" height="12" fill="#5ab85a"/><rect x="9.8" y="2" width="1.6" height="12" fill="#7ac07a"/><rect x="12.4" y="2" width="1.6" height="12" fill="#e07a7a"/><rect x="15.0" y="2" width="1.6" height="12" fill="#e85a5a"/><rect x="17.6" y="2" width="1.6" height="12" fill="#e03030"/><rect x="20.2" y="2" width="1.6" height="12" fill="#d02020"/><path d="M16,14 V22 H22 V16 Q22,14 20,14 Z" fill="#fff" stroke="#6d86aa"/></svg>
<svg style="left:1224px;top:107px" width="24" height="24" viewBox="0 0 24 24"><rect x="0.5" y="0.5" width="23" height="15" rx="1" fill="#fff" stroke="#6d86aa"/><rect x="2.0" y="2" width="1.6" height="12" fill="#3a9a3a"/><rect x="4.6" y="2" width="1.6" height="12" fill="#4aa84a"/><rect x="7.2" y="2" width="1.6" height="12" fill="#5ab85a"/><rect x="9.8" y="2" width="1.6" height="12" fill="#7ac07a"/><rect x="12.4" y="2" width="1.6" height="12" fill="#e07a7a"/><rect x="15.0" y="2" width="1.6" height="12" fill="#e85a5a"/><rect x="17.6" y="2" width="1.6" height="12" fill="#e03030"/><rect x="20.2" y="2" width="1.6" height="12" fill="#d02020"/><polygon points="23.00,19.00 22.90,19.98 21.60,20.49 21.24,21.17 21.54,22.54 20.78,23.16 19.49,22.60 18.76,22.83 18.00,24.00 17.02,23.90 16.51,22.60 15.83,22.24 14.46,22.54 13.84,21.78 14.40,20.49 14.17,19.76 13.00,19.00 13.10,18.02 14.40,17.51 14.76,16.83 14.46,15.46 15.22,14.84 16.51,15.40 17.24,15.17 18.00,14.00 18.98,14.10 19.49,15.40 20.17,15.76 21.54,15.46 22.16,16.22 21.60,17.51 21.83,18.24" fill="#c9d2e0" stroke="#6d86aa" stroke-width="1"/></svg>
<svg style="left:1720px;top:55px" width="29" height="30" viewBox="0 0 29 30"><path d="M24,6 A13,13 0 1 0 27,16" fill="none" stroke="#333" stroke-width="1.6"/><path d="M22,2 L28,3 L26,9Z" fill="#333"/><circle cx="11" cy="13" r="3.8500000000000005" fill="none" stroke="#2aa8e0" stroke-width="2.2"/><circle cx="17" cy="13" r="3.8500000000000005" fill="none" stroke="#e04040" stroke-width="2.2"/><circle cx="11" cy="19" r="3.8500000000000005" fill="none" stroke="#f0a020" stroke-width="2.2"/><circle cx="17" cy="19" r="3.8500000000000005" fill="none" stroke="#40b040" stroke-width="2.2"/></svg>
<svg style="left:1760px;top:54px" width="32" height="31" viewBox="0 0 32 31"><circle cx="10" cy="16" r="4.95" fill="none" stroke="#2aa8e0" stroke-width="2.2"/><circle cx="16" cy="16" r="4.95" fill="none" stroke="#e04040" stroke-width="2.2"/><circle cx="10" cy="22" r="4.95" fill="none" stroke="#f0a020" stroke-width="2.2"/><circle cx="16" cy="22" r="4.95" fill="none" stroke="#40b040" stroke-width="2.2"/><path d="M18,12 Q22,4 28,5" fill="none" stroke="#333" stroke-width="2.2"/><path d="M26,1 L31,5 L25,9Z" fill="#333"/></svg>
<svg style="left:1826px;top:53px" width="33" height="34" viewBox="0 0 33 34"><rect x="0.5" y="0.5" width="32" height="33" rx="2" fill="#e8e8e8"/><circle cx="16" cy="14" r="12" fill="none" stroke="#e02020" stroke-width="2.2"/><circle cx="16" cy="14" r="5" fill="#e02020"/><path d="M16,2 A12,12 0 0 1 27,10 L16,14Z M5,18 A12,12 0 0 1 8,5 L16,14Z M18,26 A12,12 0 0 1 7,22 L16,14Z" fill="#e84040"/><rect x="12" y="23" width="16" height="6" fill="#888"/></svg>
<svg style="left:1895px;top:70px" width="18" height="17" viewBox="0 0 18 17"><path d="M1,6 V16 H12 V12" fill="none" stroke="#2a5490" stroke-width="1.5"/><path d="M16,1 Q8,2 6,11" fill="none" stroke="#2a5490" stroke-width="2"/><path d="M3,7 L6,12 L10,8Z" fill="#2a5490"/></svg>
<svg style="left:1895px;top:109px" width="18" height="17" viewBox="0 0 18 17"><path d="M1,6 V16 H12 V12" fill="none" stroke="#2a5490" stroke-width="1.5"/><path d="M6,12 Q8,4 14,3" fill="none" stroke="#2a5490" stroke-width="2"/><path d="M12,0 L17,3 L12,7Z" fill="#2a5490"/></svg>

<div class="a" style="left:0;top:159px;width:525px;height:19px;background:#d9d9d9"></div>
<div class="a" style="left:0;top:160px;width:52px;height:18px;background:#fff"></div>
<div class="t" style="left:11px;top:162px">Views</div>
<div class="t" style="left:63px;top:162px">Levels</div>
<div class="t" style="left:117px;top:162px">Elements read</div>
<div class="a" style="left:0;top:208px;width:525px;height:206px;background:#fff;border-top:1px solid #d0d0d0"></div>
<div class="a" style="left:0;top:369px;width:525px;height:20px;background:#cce8ff"></div>

<svg style="left:8px;top:216px" width="12" height="8"><path d="M1,1 L6,6 L11,1" fill="none" stroke="#333" stroke-width="1.6"/></svg>
<div class="t b g" style="left:25px;top:212px">Plan views</div>
<div class="t" style="left:44px;top:232px">Roof</div>
<div class="t" style="left:44px;top:252px">Floor 4</div>
<div class="t" style="left:44px;top:272px">Floor 3</div>
<div class="t" style="left:44px;top:292px">Floor 2</div>
<div class="t" style="left:44px;top:312px">Floor 1</div>
<div class="t" style="left:44px;top:332px">Ground floor</div>
<svg style="left:8px;top:356px" width="12" height="8"><path d="M1,1 L6,6 L11,1" fill="none" stroke="#333" stroke-width="1.6"/></svg>
<div class="t b g" style="left:25px;top:352px">3D views</div>
<div class="t" style="left:44px;top:372px">3D</div>

<div class="a" style="left:1px;top:418px;width:528px;height:582px;border:3px solid #cc1626;background:#fff"></div>
<div class="a" style="left:4px;top:421px;width:521px;height:21px;background:#d9d9d9"></div>
<div class="t" style="left:3px;top:425px">Layer configuration</div>
<div class="a" style="left:4px;top:442px;width:521px;height:30px;background:#f0f0f0"></div>
<div class="a" style="left:4px;top:472px;width:521px;height:20px;background:#cce8ff"></div>
<div class="a" style="left:4px;top:612px;width:521px;height:20px;background:#f3f3f3"></div>

<svg style="left:8px;top:479px" width="12" height="8"><path d="M1,1 L6,6 L11,1" fill="none" stroke="#333" stroke-width="1.6"/></svg>
<div class="t b g" style="left:44px;top:475px">Type of pipe</div>
<div class="t" style="left:44px;top:495px">Cold water</div>
<div class="a" style="left:503px;top:494px;width:16px;height:16px;background:#0000ff"></div>
<div class="t" style="left:44px;top:515px">Hot water</div>
<div class="a" style="left:503px;top:514px;width:16px;height:16px;background:#e00000"></div>
<div class="t" style="left:44px;top:535px">Hydromixer</div>
<div class="a" style="left:503px;top:534px;width:16px;height:16px;background:#b060e0"></div>
<div class="t" style="left:44px;top:555px">Common</div>
<div class="a" style="left:503px;top:554px;width:16px;height:16px;background:#6e6e6e"></div>
<svg style="left:8px;top:579px" width="12" height="8"><path d="M1,1 L6,6 L11,1" fill="none" stroke="#333" stroke-width="1.6"/></svg>
<div class="t b g" style="left:44px;top:575px">Own elements</div>
<div class="t" style="left:44px;top:595px">Consumptions</div>
<div class="a" style="left:503px;top:594px;width:16px;height:16px;background:#a83a3a"></div>
<div class="t" style="left:44px;top:615px">Hot water production</div>
<div class="a" style="left:503px;top:614px;width:16px;height:16px;background:#d03838"></div>
<div class="t" style="left:44px;top:635px">Supply connection points</div>
<div class="a" style="left:503px;top:634px;width:16px;height:16px;background:#6e6e6e"></div>
<div class="t" style="left:44px;top:655px">Meters</div>
<div class="a" style="left:503px;top:654px;width:16px;height:16px;background:#2020e8"></div>
<div class="t" style="left:44px;top:675px">Fittings</div>
<div class="a" style="left:503px;top:674px;width:16px;height:16px;background:#773838"></div>
<div class="t" style="left:44px;top:695px">Pipes</div>
<div class="a" style="left:503px;top:694px;width:16px;height:16px;background:#3c963c"></div>
<svg style="left:8px;top:719px" width="12" height="8"><path d="M1,1 L6,6 L11,1" fill="none" stroke="#333" stroke-width="1.6"/></svg>
<div class="t b g" style="left:44px;top:715px">General options</div>
<div class="t" style="left:44px;top:735px">Dishwasher (Residential)</div>
<div class="a" style="left:503px;top:734px;width:16px;height:16px;background:#6e6e6e"></div>
<div class="t" style="left:44px;top:755px">Lavatory</div>
<div class="a" style="left:503px;top:754px;width:16px;height:16px;background:#6e6e6e"></div>
<div class="t" style="left:44px;top:775px">Water Closet (tank/one piece) CW</div>
<div class="a" style="left:503px;top:774px;width:16px;height:16px;background:#6e6e6e"></div>
<div class="t" style="left:44px;top:795px">Sink (Residential)</div>
<div class="a" style="left:503px;top:794px;width:16px;height:16px;background:#6e6e6e"></div>
<div class="t" style="left:44px;top:815px">Tanked Water Heater</div>
<div class="a" style="left:503px;top:814px;width:16px;height:16px;background:#6e6e6e"></div>
<div class="t" style="left:44px;top:835px">Storage system with exchanger</div>
<div class="a" style="left:503px;top:834px;width:16px;height:16px;background:#6e6e6e"></div>
<div class="t" style="left:44px;top:855px">Water Supply Point</div>
<div class="a" style="left:503px;top:854px;width:16px;height:16px;background:#6e6e6e"></div>
<div class="t" style="left:44px;top:875px">Preinstalled meter</div>
<div class="a" style="left:503px;top:874px;width:16px;height:16px;background:#6e6e6e"></div>
<div class="t" style="left:44px;top:895px">Shut-off valve</div>
<div class="a" style="left:503px;top:894px;width:16px;height:16px;background:#6e6e6e"></div>
<div class="t" style="left:44px;top:915px">Single room valve</div>
<div class="a" style="left:503px;top:914px;width:16px;height:16px;background:#6e6e6e"></div>
<div class="t" style="left:44px;top:935px">Water Service Pipe (type K copper)</div>
<div class="a" style="left:503px;top:934px;width:16px;height:16px;background:#6e6e6e"></div>
<svg style="left:4px;top:183px" width="24" height="23" viewBox="0 0 24 23"><path d="M1,9 V5 H4 M1,17 V21 H4 M13,21 H16 V17" fill="none" stroke="#4a72a8" stroke-width="1"/><path d="M4,11 L9,8 L14,11 V17 L9,20 L4,17Z" fill="#c8d0dc" stroke="#2a5490" stroke-width="1.1"/><path d="M4,11 L9,14 L14,11 M9,14 V20" fill="none" stroke="#2a5490"/><path d="M4,11 L9,8 L14,11 L9,14Z" fill="#fff" stroke="#2a5490"/><path d="M18,2 V10 M14,6 H22" stroke="#2a5490" stroke-width="1.6"/></svg>
<svg style="left:35px;top:183px" width="24" height="23" viewBox="0 0 24 23"><path d="M1,9 V5 H4 M1,17 V21 H4 M13,21 H16 V17" fill="none" stroke="#4a72a8" stroke-width="1"/><path d="M4,11 L9,8 L14,11 V17 L9,20 L4,17Z" fill="#c8d0dc" stroke="#2a5490" stroke-width="1.1"/><path d="M4,11 L9,14 L14,11 M9,14 V20" fill="none" stroke="#2a5490"/><path d="M4,11 L9,8 L14,11 L9,14Z" fill="#fff" stroke="#2a5490"/><path d="M11,14 L20,3 L23,5 L14,16Z" fill="#fff" stroke="#2a5490"/><path d="M19,4 L22,6" stroke="#2a5490" stroke-width="2"/></svg>
<svg style="left:66px;top:183px" width="24" height="23" viewBox="0 0 24 23"><path d="M1,9 V5 H4 M1,17 V21 H4 M13,21 H16 V17" fill="none" stroke="#4a72a8" stroke-width="1"/><path d="M4,11 L9,8 L14,11 V17 L9,20 L4,17Z" fill="#c8d0dc" stroke="#2a5490" stroke-width="1.1"/><path d="M4,11 L9,14 L14,11 M9,14 V20" fill="none" stroke="#2a5490"/><path d="M4,11 L9,8 L14,11 L9,14Z" fill="#fff" stroke="#2a5490"/><rect x="13" y="2" width="8" height="10" fill="#fff" stroke="#2a5490"/><rect x="10" y="5" width="8" height="10" fill="#fff" stroke="#2a5490"/></svg>
<svg style="left:97px;top:183px" width="24" height="23" viewBox="0 0 24 23"><path d="M1,9 V5 H4 M1,17 V21 H4 M13,21 H16 V17" fill="none" stroke="#4a72a8" stroke-width="1"/><path d="M4,11 L9,8 L14,11 V17 L9,20 L4,17Z" fill="#c8d0dc" stroke="#2a5490" stroke-width="1.1"/><path d="M4,11 L9,14 L14,11 M9,14 V20" fill="none" stroke="#2a5490"/><path d="M4,11 L9,8 L14,11 L9,14Z" fill="#fff" stroke="#2a5490"/><path d="M15,2 L21,8 M21,2 L15,8" stroke="#e01010" stroke-width="1.8"/></svg>
<svg style="left:128px;top:182px" width="22" height="20" viewBox="0 0 22 20"><path d="M3,8 Q11,0 19,8 Q11,13 3,8Z" fill="#fff" stroke="#2a5490" stroke-width="1.2"/><circle cx="11" cy="7" r="2.6" fill="#2a5490"/><path d="M4,18 L11,12 L18,18Z" fill="#c8d0dc"/><path d="M1,18 H21 M4,18 L11,12 L18,18" fill="none" stroke="#2a5490" stroke-width="1.2"/></svg>
<div class="a" style="left:159px;top:184px;width:1px;height:22px;background:#a0a0a0"></div>
<svg style="left:168px;top:185px" width="22" height="18" viewBox="0 0 22 18"><path d="M1,4 H6 L8,1 H15 L17,4 H21 V17 H1Z" fill="#fff" stroke="#4a72a8" stroke-width="1.2"/><circle cx="11" cy="10" r="5" fill="none" stroke="#4a72a8" stroke-width="1.1"/><circle cx="11" cy="10" r="3" fill="none" stroke="#4a72a8"/><path d="M3,5 V16" stroke="#4a72a8" stroke-width="0.6"/></svg>
<svg style="left:199px;top:183px" width="22" height="18" viewBox="0 0 22 18"><path d="M1,4 H6 L8,1 H15 L17,4 H21 V17 H1Z" fill="#fff" stroke="#4a72a8" stroke-width="1.2"/><circle cx="11" cy="10" r="5" fill="none" stroke="#4a72a8" stroke-width="1.1"/><circle cx="11" cy="10" r="3" fill="none" stroke="#4a72a8"/><path d="M3,5 V16" stroke="#4a72a8" stroke-width="0.6"/><path d="M1,19 Q3,13 8,14" fill="none" stroke="#2a5490" stroke-width="1.8"/><path d="M7,11 L10,14 L6,16Z" fill="#2a5490"/></svg>
<div class="a" style="left:229px;top:184px;width:1px;height:22px;background:#a0a0a0"></div>
<svg style="left:236px;top:182px" width="23" height="22" viewBox="0 0 23 22"><path d="M1,1 L8,5 V21 L1,17Z" fill="#c3cedd" stroke="#2a5490"/><path d="M3,4 V17 M5,5 V19 M1,8 L8,12 M1,12 L8,16" stroke="#2a5490" stroke-width="0.5"/><path d="M8,11 L15,8 L22,12 V18 L15,21 L8,18Z" fill="#fff" stroke="#4a72a8"/><path d="M15,21 V14 L22,12 M8,11 L15,14" fill="none" stroke="#4a72a8" stroke-width="0.8"/></svg>
<svg style="left:267px;top:182px" width="23" height="22" viewBox="0 0 23 22"><path d="M1,1 L8,5 V21 L1,17Z" fill="#c3cedd" stroke="#2a5490"/><path d="M3,4 V17 M5,5 V19 M1,8 L8,12 M1,12 L8,16" stroke="#2a5490" stroke-width="0.5"/><path d="M8,11 L15,8 L22,12 V18 L15,21 L8,18Z" fill="#fff" stroke="#4a72a8"/><path d="M15,21 V14 L22,12 M8,11 L15,14" fill="none" stroke="#4a72a8" stroke-width="0.8"/><path d="M1,22 Q3,16 8,17" fill="none" stroke="#2a5490" stroke-width="1.8"/><path d="M7,14 L10,17 L6,19Z" fill="#2a5490"/></svg>
<div class="a" style="left:255px;top:416px;width:14px;height:1px;border-top:1px dotted #888"></div>
<svg style="left:488px;top:427px" width="12" height="8" viewBox="0 0 12 8"><path d="M1,1 L6,6 L11,1" fill="none" stroke="#111" stroke-width="1.8"/></svg>
<svg style="left:509px;top:426px" width="11" height="11" viewBox="0 0 11 11"><path d="M1,1 L10,10 M10,1 L1,10" stroke="#111" stroke-width="1.4"/></svg>
<svg style="left:3px;top:444px" width="24" height="24" viewBox="0 0 24 24"><polygon points="23.00,12.00 22.83,13.91 20.06,14.93 19.43,16.29 20.43,19.07 19.07,20.43 16.29,19.43 14.93,20.06 13.91,22.83 12.00,23.00 10.51,20.45 9.07,20.06 6.50,21.53 4.93,20.43 5.43,17.52 4.57,16.29 1.66,15.76 1.17,13.91 3.42,12.00 3.55,10.51 1.66,8.24 2.47,6.50 5.43,6.48 6.48,5.43 6.50,2.47 8.24,1.66 10.51,3.55 12.00,3.42 13.91,1.17 15.76,1.66 16.29,4.57 17.52,5.43 20.43,4.93 21.53,6.50 20.06,9.07 20.45,10.51" fill="#e8edf4" stroke="#4a72a8" stroke-width="1"/><circle cx="11" cy="11" r="4" fill="#fff" stroke="#4a72a8"/><path d="M12,20 a5,5 0 0 1 9,-4 M22,18 a5,5 0 0 1 -9,4" fill="none" stroke="#2a5490" stroke-width="2"/></svg>
<svg style="left:34px;top:446px" width="25" height="24" viewBox="0 0 25 24"><path d="M1,13 L11,18 L23,12 L13,7Z" fill="#2a5490"/><path d="M1,10 L11,15 L23,9 L13,4Z" fill="#9aaac0" stroke="#2a5490"/><path d="M1,6 L11,11 L23,5 L13,0.5Z" fill="#fff" stroke="#2a5490" stroke-width="1.1"/><path d="M14,18 a5,5 0 0 1 9,-4 M24,16 a5,5 0 0 1 -9,4" fill="none" stroke="#2a5490" stroke-width="2"/></svg>
<div class="a" style="left:65px;top:444px;width:1px;height:26px;background:#a0a0a0"></div>
<svg style="left:73px;top:446px" width="25" height="22" viewBox="0 0 25 22"><path d="M1,10 L10,1 H24 L15,10Z" fill="#dde4ee" stroke="#2a5490" stroke-width="1.1"/><path d="M15,10 L24,1 V12 L15,21Z" fill="#fff" stroke="#2a5490" stroke-width="1.1"/><path d="M1,10 H15 V21 H4 V15 H1Z" fill="#fff" stroke="#2a5490" stroke-width="1.1"/></svg>
<svg style="left:107px;top:446px" width="18" height="25" viewBox="0 0 18 25"><rect x="0.5" y="0.5" width="17" height="24" fill="#dde4ee" stroke="#2a5490"/><path d="M4,0 V25 M8,0 V25 M11,0 V25 M14,0 V25" stroke="#2a5490" stroke-width="1.3"/><path d="M0,3 H18 M0,21 H18" stroke="#2a5490" stroke-width="0.6"/></svg>
<svg style="left:137px;top:446px" width="20" height="22" viewBox="0 0 20 22"><path d="M1,6 L10,1 L19,6 V16 L10,21 L1,16Z" fill="#fff" stroke="#b8c4d4"/><path d="M1,6 L10,11 L19,6 M10,11 V21" fill="none" stroke="#c4cedc"/><rect x="5" y="10" width="4" height="5" fill="none" stroke="#aab"/></svg>
<div class="a" style="left:165px;top:444px;width:1px;height:26px;background:#a0a0a0"></div>
<svg style="left:175px;top:446px" width="22" height="24" viewBox="0 0 22 24"><rect x="0.5" y="0.5" width="11" height="10" fill="#fff" stroke="#2a5490"/><rect x="8" y="4" width="13" height="11" fill="#fff" stroke="#2a5490"/><text x="2.5" y="8.5" font-size="7.5" font-weight="bold" font-family="Liberation Sans" fill="#2a5490">B</text><text x="11" y="13" font-size="8" font-weight="bold" font-family="Liberation Sans" fill="#2a5490">A</text><path d="M21,17 H11 L3,24" fill="none" stroke="#2a5490"/></svg>
<svg style="left:206px;top:445px" width="20" height="25" viewBox="0 0 20 25"><path d="M3,12 H17 L16,24 H4Z" fill="#fff" stroke="#2a5490"/><path d="M3,17 H17" stroke="#2a5490"/><path d="M5,11 L6,3 M9,11 V1 M12,11 L14,3 M15,11 L17,4" stroke="#2a5490" stroke-width="1.6"/></svg>
<div class="a" style="left:236px;top:444px;width:1px;height:26px;background:#a0a0a0"></div>
<svg style="left:247px;top:447px" width="17" height="24" viewBox="0 0 17 24"><path d="M3,10 V6 a5.5,5.5 0 0 1 11,0 V10" fill="none" stroke="#2a5490" stroke-width="1.8"/><rect x="1" y="10" width="15" height="13" rx="1" fill="#fff" stroke="#2a5490" stroke-width="1.5"/><circle cx="8.5" cy="15" r="1.6" fill="#2a5490"/><path d="M8.5,15 V19" stroke="#2a5490" stroke-width="1.8"/></svg>
<svg style="left:275px;top:445px" width="24" height="24" viewBox="0 0 24 24"><path d="M8,4 L14,4 L23,13 L14,22 L5,13 V6Z" fill="#fff" stroke="#4a72a8" stroke-width="1.1"/><circle cx="9" cy="8" r="1.5" fill="none" stroke="#4a72a8"/><path d="M1,1 L8,7" stroke="#4a72a8"/></svg>
<svg style="left:306px;top:446px" width="24" height="22" viewBox="0 0 24 22"><rect x="0.5" y="0.5" width="22" height="15" rx="1" fill="#fff" stroke="#8899aa"/><rect x="2.0" y="2" width="1.6" height="12" fill="#2a9a3a"/><rect x="4.5" y="2" width="1.6" height="12" fill="#3aa84a"/><rect x="7.0" y="2" width="1.6" height="12" fill="#5ab85a"/><rect x="9.5" y="2" width="1.6" height="12" fill="#8ac08a"/><rect x="12.0" y="2" width="1.6" height="12" fill="#e08a8a"/><rect x="14.5" y="2" width="1.6" height="12" fill="#e85a5a"/><rect x="17.0" y="2" width="1.6" height="12" fill="#e03030"/><rect x="19.5" y="2" width="1.6" height="12" fill="#d02020"/><path d="M13,17 Q17,13 21,17 Q17,21 13,17Z" fill="#fff" stroke="#333"/><circle cx="17" cy="17" r="1.5" fill="#333"/></svg>
<div class="a" style="left:337px;top:444px;width:1px;height:26px;background:#a0a0a0"></div>
<div class="a" style="left:343px;top:443px;width:29px;height:29px;background:#d8eaf8;border:1px solid #c6dff3"></div>
<div class="a" style="left:374px;top:443px;width:29px;height:29px;background:#d8eaf8;border:1px solid #c6dff3"></div>
<svg style="left:345px;top:446px" width="25" height="22" viewBox="0 0 25 22"><path d="M1,21 L8,4 H21 L14,21Z" fill="#fff" stroke="#2a5490" stroke-width="1.2"/><path d="M4,21 L10,4 M7,21 L13,4 M10,21 L16,4 M13,21 L19,4" stroke="#2a5490" stroke-width="1"/><rect x="16" y="1" width="8" height="5" rx="2" fill="#fff" stroke="#2a5490"/><path d="M21,6 V20" stroke="#2a5490" stroke-width="1.5"/></svg>
<svg style="left:377px;top:446px" width="24" height="22" viewBox="0 0 24 22"><path d="M3,1 V12 Q3,20 9,20 Q14,20 14,14 V10 H22" fill="none" stroke="#4a72a8" stroke-width="4.5"/><path d="M3,1 V12 Q3,20 9,20 Q14,20 14,14 V10 H22" fill="none" stroke="#fff" stroke-width="2"/><rect x="0" y="0" width="7" height="3" fill="#fff" stroke="#4a72a8"/><rect x="20" y="7" width="3" height="7" fill="#fff" stroke="#4a72a8"/></svg>
<div class="a" style="left:408px;top:444px;width:1px;height:26px;background:#a0a0a0"></div>
<svg style="left:414px;top:446px" width="25" height="25" viewBox="0 0 25 25"><path d="M12,1 L23,6 V18 L12,24 L1,18 V6Z" fill="#fff" stroke="#2a5490" stroke-width="1.1"/><path d="M1,6 L12,12 V24 L1,18Z" fill="#c4c8d4" stroke="#2a5490"/><path d="M12,12 L23,6 V18 L12,24Z" fill="#dfe2ea" stroke="#2a5490"/></svg>
<svg style="left:391px;top:476px" width="16" height="12" viewBox="0 0 16 12"><path d="M0.5,6 H3 M13,6 H15.5" stroke="#2a5490" stroke-width="1.5"/><path d="M2.5,1 L13.5,11 V1 L2.5,11Z" fill="#e4e9f0" stroke="#2a5490" stroke-width="1.2" stroke-linejoin="round"/></svg>
<svg style="left:419px;top:476px" width="17" height="15" viewBox="0 0 17 15"><path d="M3,9 H13 L16,13.5 H6Z" fill="#d4d4d4"/><text x="-0.5" y="9.5" font-size="12" font-weight="bold" font-family="Liberation Sans" fill="#2a5490" stroke="#2a5490" stroke-width="0.6" letter-spacing="-0.6">3D</text></svg>
<svg style="left:448px;top:474px" width="15" height="16" viewBox="0 0 15 16"><path d="M7.5,0.5 L14.5,4 V12 L7.5,15.5 L0.5,12 V4Z" fill="#9aa0aa" stroke="#2a5490" stroke-width="1.2"/><path d="M0.5,4 L7.5,8 L14.5,4 M7.5,8 V15.5 M4,2.3 L11,6 M11,2.3 L4,6 M0.5,8 L7.5,12 L14.5,8 M4,6 V14 M11,6 V14" fill="none" stroke="#2a5490" stroke-width="0.7"/><path d="M5,7 L7.5,8.5 L10,7 V10 L7.5,11.5 L5,10Z" fill="#fff"/></svg>
<svg style="left:477px;top:474px" width="13" height="16" viewBox="0 0 13 16"><path d="M3,7 V4 a4,4 0 0 1 8,0 V5" fill="none" stroke="#6a88b0" stroke-width="1.4"/><rect x="0.5" y="7" width="12" height="8.5" rx="1.5" fill="#9a9a9a" stroke="#6a88b0" stroke-width="1"/><rect x="5.5" y="9.5" width="2" height="3.5" fill="#fff"/></svg>
<svg style="left:391px;top:496px" width="16" height="12" viewBox="0 0 16 12"><path d="M0.5,6 H3 M13,6 H15.5" stroke="#2a5490" stroke-width="1.5"/><path d="M2.5,1 L13.5,11 V1 L2.5,11Z" fill="#e4e9f0" stroke="#2a5490" stroke-width="1.2" stroke-linejoin="round"/></svg>
<svg style="left:419px;top:496px" width="17" height="15" viewBox="0 0 17 15"><path d="M3,9 H13 L16,13.5 H6Z" fill="#d4d4d4"/><text x="-0.5" y="9.5" font-size="12" font-weight="bold" font-family="Liberation Sans" fill="#2a5490" stroke="#2a5490" stroke-width="0.6" letter-spacing="-0.6">3D</text></svg>
<svg style="left:448px;top:494px" width="15" height="16" viewBox="0 0 15 16"><path d="M7.5,0.5 L14.5,4 V12 L7.5,15.5 L0.5,12 V4Z" fill="#9aa0aa" stroke="#2a5490" stroke-width="1.2"/><path d="M0.5,4 L7.5,8 L14.5,4 M7.5,8 V15.5 M4,2.3 L11,6 M11,2.3 L4,6 M0.5,8 L7.5,12 L14.5,8 M4,6 V14 M11,6 V14" fill="none" stroke="#2a5490" stroke-width="0.7"/><path d="M5,7 L7.5,8.5 L10,7 V10 L7.5,11.5 L5,10Z" fill="#fff"/></svg>
<svg style="left:477px;top:494px" width="13" height="16" viewBox="0 0 13 16"><path d="M3,7 V4 a4,4 0 0 1 8,0 V5" fill="none" stroke="#6a88b0" stroke-width="1.4"/><rect x="0.5" y="7" width="12" height="8.5" rx="1.5" fill="#9a9a9a" stroke="#6a88b0" stroke-width="1"/><rect x="5.5" y="9.5" width="2" height="3.5" fill="#fff"/></svg>
<svg style="left:391px;top:516px" width="16" height="12" viewBox="0 0 16 12"><path d="M0.5,6 H3 M13,6 H15.5" stroke="#2a5490" stroke-width="1.5"/><path d="M2.5,1 L13.5,11 V1 L2.5,11Z" fill="#e4e9f0" stroke="#2a5490" stroke-width="1.2" stroke-linejoin="round"/></svg>
<svg style="left:419px;top:516px" width="17" height="15" viewBox="0 0 17 15"><path d="M3,9 H13 L16,13.5 H6Z" fill="#d4d4d4"/><text x="-0.5" y="9.5" font-size="12" font-weight="bold" font-family="Liberation Sans" fill="#2a5490" stroke="#2a5490" stroke-width="0.6" letter-spacing="-0.6">3D</text></svg>
<svg style="left:448px;top:514px" width="15" height="16" viewBox="0 0 15 16"><path d="M7.5,0.5 L14.5,4 V12 L7.5,15.5 L0.5,12 V4Z" fill="#9aa0aa" stroke="#2a5490" stroke-width="1.2"/><path d="M0.5,4 L7.5,8 L14.5,4 M7.5,8 V15.5 M4,2.3 L11,6 M11,2.3 L4,6 M0.5,8 L7.5,12 L14.5,8 M4,6 V14 M11,6 V14" fill="none" stroke="#2a5490" stroke-width="0.7"/><path d="M5,7 L7.5,8.5 L10,7 V10 L7.5,11.5 L5,10Z" fill="#fff"/></svg>
<svg style="left:477px;top:514px" width="13" height="16" viewBox="0 0 13 16"><path d="M3,7 V4 a4,4 0 0 1 8,0 V5" fill="none" stroke="#6a88b0" stroke-width="1.4"/><rect x="0.5" y="7" width="12" height="8.5" rx="1.5" fill="#9a9a9a" stroke="#6a88b0" stroke-width="1"/><rect x="5.5" y="9.5" width="2" height="3.5" fill="#fff"/></svg>
<svg style="left:391px;top:536px" width="16" height="12" viewBox="0 0 16 12"><path d="M0.5,6 H3 M13,6 H15.5" stroke="#2a5490" stroke-width="1.5"/><path d="M2.5,1 L13.5,11 V1 L2.5,11Z" fill="#e4e9f0" stroke="#2a5490" stroke-width="1.2" stroke-linejoin="round"/></svg>
<svg style="left:419px;top:536px" width="17" height="15" viewBox="0 0 17 15"><path d="M3,9 H13 L16,13.5 H6Z" fill="#d4d4d4"/><text x="-0.5" y="9.5" font-size="12" font-weight="bold" font-family="Liberation Sans" fill="#2a5490" stroke="#2a5490" stroke-width="0.6" letter-spacing="-0.6">3D</text></svg>
<svg style="left:448px;top:534px" width="15" height="16" viewBox="0 0 15 16"><path d="M7.5,0.5 L14.5,4 V12 L7.5,15.5 L0.5,12 V4Z" fill="#9aa0aa" stroke="#2a5490" stroke-width="1.2"/><path d="M0.5,4 L7.5,8 L14.5,4 M7.5,8 V15.5 M4,2.3 L11,6 M11,2.3 L4,6 M0.5,8 L7.5,12 L14.5,8 M4,6 V14 M11,6 V14" fill="none" stroke="#2a5490" stroke-width="0.7"/><path d="M5,7 L7.5,8.5 L10,7 V10 L7.5,11.5 L5,10Z" fill="#fff"/></svg>
<svg style="left:477px;top:534px" width="13" height="16" viewBox="0 0 13 16"><path d="M3,7 V4 a4,4 0 0 1 8,0 V5" fill="none" stroke="#6a88b0" stroke-width="1.4"/><rect x="0.5" y="7" width="12" height="8.5" rx="1.5" fill="#9a9a9a" stroke="#6a88b0" stroke-width="1"/><rect x="5.5" y="9.5" width="2" height="3.5" fill="#fff"/></svg>
<svg style="left:391px;top:556px" width="16" height="12" viewBox="0 0 16 12"><path d="M0.5,6 H3 M13,6 H15.5" stroke="#2a5490" stroke-width="1.5"/><path d="M2.5,1 L13.5,11 V1 L2.5,11Z" fill="#e4e9f0" stroke="#2a5490" stroke-width="1.2" stroke-linejoin="round"/></svg>
<svg style="left:419px;top:556px" width="17" height="15" viewBox="0 0 17 15"><path d="M3,9 H13 L16,13.5 H6Z" fill="#d4d4d4"/><text x="-0.5" y="9.5" font-size="12" font-weight="bold" font-family="Liberation Sans" fill="#2a5490" stroke="#2a5490" stroke-width="0.6" letter-spacing="-0.6">3D</text></svg>
<svg style="left:448px;top:554px" width="15" height="16" viewBox="0 0 15 16"><path d="M7.5,0.5 L14.5,4 V12 L7.5,15.5 L0.5,12 V4Z" fill="#9aa0aa" stroke="#2a5490" stroke-width="1.2"/><path d="M0.5,4 L7.5,8 L14.5,4 M7.5,8 V15.5 M4,2.3 L11,6 M11,2.3 L4,6 M0.5,8 L7.5,12 L14.5,8 M4,6 V14 M11,6 V14" fill="none" stroke="#2a5490" stroke-width="0.7"/><path d="M5,7 L7.5,8.5 L10,7 V10 L7.5,11.5 L5,10Z" fill="#fff"/></svg>
<svg style="left:477px;top:554px" width="13" height="16" viewBox="0 0 13 16"><path d="M3,7 V4 a4,4 0 0 1 8,0 V5" fill="none" stroke="#6a88b0" stroke-width="1.4"/><rect x="0.5" y="7" width="12" height="8.5" rx="1.5" fill="#9a9a9a" stroke="#6a88b0" stroke-width="1"/><rect x="5.5" y="9.5" width="2" height="3.5" fill="#fff"/></svg>
<svg style="left:391px;top:576px" width="16" height="12" viewBox="0 0 16 12"><path d="M0.5,6 H3 M13,6 H15.5" stroke="#2a5490" stroke-width="1.5"/><path d="M2.5,1 L13.5,11 V1 L2.5,11Z" fill="#e4e9f0" stroke="#2a5490" stroke-width="1.2" stroke-linejoin="round"/></svg>
<svg style="left:419px;top:576px" width="17" height="15" viewBox="0 0 17 15"><path d="M3,9 H13 L16,13.5 H6Z" fill="#d4d4d4"/><text x="-0.5" y="9.5" font-size="12" font-weight="bold" font-family="Liberation Sans" fill="#2a5490" stroke="#2a5490" stroke-width="0.6" letter-spacing="-0.6">3D</text></svg>
<svg style="left:448px;top:574px" width="15" height="16" viewBox="0 0 15 16"><path d="M7.5,0.5 L14.5,4 V12 L7.5,15.5 L0.5,12 V4Z" fill="#9aa0aa" stroke="#2a5490" stroke-width="1.2"/><path d="M0.5,4 L7.5,8 L14.5,4 M7.5,8 V15.5 M4,2.3 L11,6 M11,2.3 L4,6 M0.5,8 L7.5,12 L14.5,8 M4,6 V14 M11,6 V14" fill="none" stroke="#2a5490" stroke-width="0.7"/><path d="M5,7 L7.5,8.5 L10,7 V10 L7.5,11.5 L5,10Z" fill="#fff"/></svg>
<svg style="left:477px;top:574px" width="13" height="16" viewBox="0 0 13 16"><path d="M3,7 V4 a4,4 0 0 1 8,0 V5" fill="none" stroke="#6a88b0" stroke-width="1.4"/><rect x="0.5" y="7" width="12" height="8.5" rx="1.5" fill="#9a9a9a" stroke="#6a88b0" stroke-width="1"/><rect x="5.5" y="9.5" width="2" height="3.5" fill="#fff"/></svg>
<svg style="left:391px;top:596px" width="16" height="12" viewBox="0 0 16 12"><path d="M0.5,6 H3 M13,6 H15.5" stroke="#2a5490" stroke-width="1.5"/><path d="M2.5,1 L13.5,11 V1 L2.5,11Z" fill="#e4e9f0" stroke="#2a5490" stroke-width="1.2" stroke-linejoin="round"/></svg>
<svg style="left:419px;top:596px" width="17" height="15" viewBox="0 0 17 15"><path d="M3,9 H13 L16,13.5 H6Z" fill="#d4d4d4"/><text x="-0.5" y="9.5" font-size="12" font-weight="bold" font-family="Liberation Sans" fill="#2a5490" stroke="#2a5490" stroke-width="0.6" letter-spacing="-0.6">3D</text></svg>
<svg style="left:448px;top:594px" width="15" height="16" viewBox="0 0 15 16"><path d="M7.5,0.5 L14.5,4 V12 L7.5,15.5 L0.5,12 V4Z" fill="#9aa0aa" stroke="#2a5490" stroke-width="1.2"/><path d="M0.5,4 L7.5,8 L14.5,4 M7.5,8 V15.5 M4,2.3 L11,6 M11,2.3 L4,6 M0.5,8 L7.5,12 L14.5,8 M4,6 V14 M11,6 V14" fill="none" stroke="#2a5490" stroke-width="0.7"/><path d="M5,7 L7.5,8.5 L10,7 V10 L7.5,11.5 L5,10Z" fill="#fff"/></svg>
<svg style="left:477px;top:594px" width="13" height="16" viewBox="0 0 13 16"><path d="M3,7 V4 a4,4 0 0 1 8,0 V5" fill="none" stroke="#6a88b0" stroke-width="1.4"/><rect x="0.5" y="7" width="12" height="8.5" rx="1.5" fill="#9a9a9a" stroke="#6a88b0" stroke-width="1"/><rect x="5.5" y="9.5" width="2" height="3.5" fill="#fff"/></svg>
<svg style="left:391px;top:616px" width="16" height="12" viewBox="0 0 16 12"><path d="M0.5,6 H3 M13,6 H15.5" stroke="#2a5490" stroke-width="1.5"/><path d="M2.5,1 L13.5,11 V1 L2.5,11Z" fill="#e4e9f0" stroke="#2a5490" stroke-width="1.2" stroke-linejoin="round"/></svg>
<svg style="left:419px;top:616px" width="17" height="15" viewBox="0 0 17 15"><path d="M3,9 H13 L16,13.5 H6Z" fill="#d4d4d4"/><text x="-0.5" y="9.5" font-size="12" font-weight="bold" font-family="Liberation Sans" fill="#2a5490" stroke="#2a5490" stroke-width="0.6" letter-spacing="-0.6">3D</text></svg>
<svg style="left:448px;top:614px" width="15" height="16" viewBox="0 0 15 16"><path d="M7.5,0.5 L14.5,4 V12 L7.5,15.5 L0.5,12 V4Z" fill="#9aa0aa" stroke="#2a5490" stroke-width="1.2"/><path d="M0.5,4 L7.5,8 L14.5,4 M7.5,8 V15.5 M4,2.3 L11,6 M11,2.3 L4,6 M0.5,8 L7.5,12 L14.5,8 M4,6 V14 M11,6 V14" fill="none" stroke="#2a5490" stroke-width="0.7"/><path d="M5,7 L7.5,8.5 L10,7 V10 L7.5,11.5 L5,10Z" fill="#fff"/></svg>
<svg style="left:477px;top:614px" width="13" height="16" viewBox="0 0 13 16"><path d="M3,7 V4 a4,4 0 0 1 8,0 V5" fill="none" stroke="#6a88b0" stroke-width="1.4"/><rect x="0.5" y="7" width="12" height="8.5" rx="1.5" fill="#9a9a9a" stroke="#6a88b0" stroke-width="1"/><rect x="5.5" y="9.5" width="2" height="3.5" fill="#fff"/></svg>
<svg style="left:391px;top:636px" width="16" height="12" viewBox="0 0 16 12"><path d="M0.5,6 H3 M13,6 H15.5" stroke="#2a5490" stroke-width="1.5"/><path d="M2.5,1 L13.5,11 V1 L2.5,11Z" fill="#e4e9f0" stroke="#2a5490" stroke-width="1.2" stroke-linejoin="round"/></svg>
<svg style="left:419px;top:636px" width="17" height="15" viewBox="0 0 17 15"><path d="M3,9 H13 L16,13.5 H6Z" fill="#d4d4d4"/><text x="-0.5" y="9.5" font-size="12" font-weight="bold" font-family="Liberation Sans" fill="#2a5490" stroke="#2a5490" stroke-width="0.6" letter-spacing="-0.6">3D</text></svg>
<svg style="left:448px;top:634px" width="15" height="16" viewBox="0 0 15 16"><path d="M7.5,0.5 L14.5,4 V12 L7.5,15.5 L0.5,12 V4Z" fill="#9aa0aa" stroke="#2a5490" stroke-width="1.2"/><path d="M0.5,4 L7.5,8 L14.5,4 M7.5,8 V15.5 M4,2.3 L11,6 M11,2.3 L4,6 M0.5,8 L7.5,12 L14.5,8 M4,6 V14 M11,6 V14" fill="none" stroke="#2a5490" stroke-width="0.7"/><path d="M5,7 L7.5,8.5 L10,7 V10 L7.5,11.5 L5,10Z" fill="#fff"/></svg>
<svg style="left:477px;top:634px" width="13" height="16" viewBox="0 0 13 16"><path d="M3,7 V4 a4,4 0 0 1 8,0 V5" fill="none" stroke="#6a88b0" stroke-width="1.4"/><rect x="0.5" y="7" width="12" height="8.5" rx="1.5" fill="#9a9a9a" stroke="#6a88b0" stroke-width="1"/><rect x="5.5" y="9.5" width="2" height="3.5" fill="#fff"/></svg>
<svg style="left:391px;top:656px" width="16" height="12" viewBox="0 0 16 12"><path d="M0.5,6 H3 M13,6 H15.5" stroke="#2a5490" stroke-width="1.5"/><path d="M2.5,1 L13.5,11 V1 L2.5,11Z" fill="#e4e9f0" stroke="#2a5490" stroke-width="1.2" stroke-linejoin="round"/></svg>
<svg style="left:419px;top:656px" width="17" height="15" viewBox="0 0 17 15"><path d="M3,9 H13 L16,13.5 H6Z" fill="#d4d4d4"/><text x="-0.5" y="9.5" font-size="12" font-weight="bold" font-family="Liberation Sans" fill="#2a5490" stroke="#2a5490" stroke-width="0.6" letter-spacing="-0.6">3D</text></svg>
<svg style="left:448px;top:654px" width="15" height="16" viewBox="0 0 15 16"><path d="M7.5,0.5 L14.5,4 V12 L7.5,15.5 L0.5,12 V4Z" fill="#9aa0aa" stroke="#2a5490" stroke-width="1.2"/><path d="M0.5,4 L7.5,8 L14.5,4 M7.5,8 V15.5 M4,2.3 L11,6 M11,2.3 L4,6 M0.5,8 L7.5,12 L14.5,8 M4,6 V14 M11,6 V14" fill="none" stroke="#2a5490" stroke-width="0.7"/><path d="M5,7 L7.5,8.5 L10,7 V10 L7.5,11.5 L5,10Z" fill="#fff"/></svg>
<svg style="left:477px;top:654px" width="13" height="16" viewBox="0 0 13 16"><path d="M3,7 V4 a4,4 0 0 1 8,0 V5" fill="none" stroke="#6a88b0" stroke-width="1.4"/><rect x="0.5" y="7" width="12" height="8.5" rx="1.5" fill="#9a9a9a" stroke="#6a88b0" stroke-width="1"/><rect x="5.5" y="9.5" width="2" height="3.5" fill="#fff"/></svg>
<svg style="left:391px;top:676px" width="16" height="12" viewBox="0 0 16 12"><path d="M0.5,6 H3 M13,6 H15.5" stroke="#2a5490" stroke-width="1.5"/><path d="M2.5,1 L13.5,11 V1 L2.5,11Z" fill="#e4e9f0" stroke="#2a5490" stroke-width="1.2" stroke-linejoin="round"/></svg>
<svg style="left:419px;top:676px" width="17" height="15" viewBox="0 0 17 15"><path d="M3,9 H13 L16,13.5 H6Z" fill="#d4d4d4"/><text x="-0.5" y="9.5" font-size="12" font-weight="bold" font-family="Liberation Sans" fill="#2a5490" stroke="#2a5490" stroke-width="0.6" letter-spacing="-0.6">3D</text></svg>
<svg style="left:448px;top:674px" width="15" height="16" viewBox="0 0 15 16"><path d="M7.5,0.5 L14.5,4 V12 L7.5,15.5 L0.5,12 V4Z" fill="#9aa0aa" stroke="#2a5490" stroke-width="1.2"/><path d="M0.5,4 L7.5,8 L14.5,4 M7.5,8 V15.5 M4,2.3 L11,6 M11,2.3 L4,6 M0.5,8 L7.5,12 L14.5,8 M4,6 V14 M11,6 V14" fill="none" stroke="#2a5490" stroke-width="0.7"/><path d="M5,7 L7.5,8.5 L10,7 V10 L7.5,11.5 L5,10Z" fill="#fff"/></svg>
<svg style="left:477px;top:674px" width="13" height="16" viewBox="0 0 13 16"><path d="M3,7 V4 a4,4 0 0 1 8,0 V5" fill="none" stroke="#6a88b0" stroke-width="1.4"/><rect x="0.5" y="7" width="12" height="8.5" rx="1.5" fill="#9a9a9a" stroke="#6a88b0" stroke-width="1"/><rect x="5.5" y="9.5" width="2" height="3.5" fill="#fff"/></svg>
<svg style="left:391px;top:696px" width="16" height="12" viewBox="0 0 16 12"><path d="M0.5,6 H3 M13,6 H15.5" stroke="#2a5490" stroke-width="1.5"/><path d="M2.5,1 L13.5,11 V1 L2.5,11Z" fill="#e4e9f0" stroke="#2a5490" stroke-width="1.2" stroke-linejoin="round"/></svg>
<svg style="left:419px;top:696px" width="17" height="15" viewBox="0 0 17 15"><path d="M3,9 H13 L16,13.5 H6Z" fill="#d4d4d4"/><text x="-0.5" y="9.5" font-size="12" font-weight="bold" font-family="Liberation Sans" fill="#2a5490" stroke="#2a5490" stroke-width="0.6" letter-spacing="-0.6">3D</text></svg>
<svg style="left:448px;top:694px" width="15" height="16" viewBox="0 0 15 16"><path d="M7.5,0.5 L14.5,4 V12 L7.5,15.5 L0.5,12 V4Z" fill="#9aa0aa" stroke="#2a5490" stroke-width="1.2"/><path d="M0.5,4 L7.5,8 L14.5,4 M7.5,8 V15.5 M4,2.3 L11,6 M11,2.3 L4,6 M0.5,8 L7.5,12 L14.5,8 M4,6 V14 M11,6 V14" fill="none" stroke="#2a5490" stroke-width="0.7"/><path d="M5,7 L7.5,8.5 L10,7 V10 L7.5,11.5 L5,10Z" fill="#fff"/></svg>
<svg style="left:477px;top:694px" width="13" height="16" viewBox="0 0 13 16"><path d="M3,7 V4 a4,4 0 0 1 8,0 V5" fill="none" stroke="#6a88b0" stroke-width="1.4"/><rect x="0.5" y="7" width="12" height="8.5" rx="1.5" fill="#9a9a9a" stroke="#6a88b0" stroke-width="1"/><rect x="5.5" y="9.5" width="2" height="3.5" fill="#fff"/></svg>
<svg style="left:391px;top:716px" width="16" height="12" viewBox="0 0 16 12"><path d="M0.5,6 H3 M13,6 H15.5" stroke="#2a5490" stroke-width="1.5"/><path d="M2.5,1 L13.5,11 V1 L2.5,11Z" fill="#e4e9f0" stroke="#2a5490" stroke-width="1.2" stroke-linejoin="round"/></svg>
<svg style="left:419px;top:716px" width="17" height="15" viewBox="0 0 17 15"><path d="M3,9 H13 L16,13.5 H6Z" fill="#d4d4d4"/><text x="-0.5" y="9.5" font-size="12" font-weight="bold" font-family="Liberation Sans" fill="#2a5490" stroke="#2a5490" stroke-width="0.6" letter-spacing="-0.6">3D</text></svg>
<svg style="left:448px;top:714px" width="15" height="16" viewBox="0 0 15 16"><path d="M7.5,0.5 L14.5,4 V12 L7.5,15.5 L0.5,12 V4Z" fill="#9aa0aa" stroke="#2a5490" stroke-width="1.2"/><path d="M0.5,4 L7.5,8 L14.5,4 M7.5,8 V15.5 M4,2.3 L11,6 M11,2.3 L4,6 M0.5,8 L7.5,12 L14.5,8 M4,6 V14 M11,6 V14" fill="none" stroke="#2a5490" stroke-width="0.7"/><path d="M5,7 L7.5,8.5 L10,7 V10 L7.5,11.5 L5,10Z" fill="#fff"/></svg>
<svg style="left:477px;top:714px" width="13" height="16" viewBox="0 0 13 16"><path d="M3,7 V4 a4,4 0 0 1 8,0 V5" fill="none" stroke="#6a88b0" stroke-width="1.4"/><rect x="0.5" y="7" width="12" height="8.5" rx="1.5" fill="#9a9a9a" stroke="#6a88b0" stroke-width="1"/><rect x="5.5" y="9.5" width="2" height="3.5" fill="#fff"/></svg>
<svg style="left:391px;top:736px" width="16" height="12" viewBox="0 0 16 12"><path d="M0.5,6 H3 M13,6 H15.5" stroke="#2a5490" stroke-width="1.5"/><path d="M2.5,1 L13.5,11 V1 L2.5,11Z" fill="#e4e9f0" stroke="#2a5490" stroke-width="1.2" stroke-linejoin="round"/></svg>
<svg style="left:419px;top:736px" width="17" height="15" viewBox="0 0 17 15"><path d="M3,9 H13 L16,13.5 H6Z" fill="#d4d4d4"/><text x="-0.5" y="9.5" font-size="12" font-weight="bold" font-family="Liberation Sans" fill="#2a5490" stroke="#2a5490" stroke-width="0.6" letter-spacing="-0.6">3D</text></svg>
<svg style="left:448px;top:734px" width="15" height="16" viewBox="0 0 15 16"><path d="M7.5,0.5 L14.5,4 V12 L7.5,15.5 L0.5,12 V4Z" fill="#9aa0aa" stroke="#2a5490" stroke-width="1.2"/><path d="M0.5,4 L7.5,8 L14.5,4 M7.5,8 V15.5 M4,2.3 L11,6 M11,2.3 L4,6 M0.5,8 L7.5,12 L14.5,8 M4,6 V14 M11,6 V14" fill="none" stroke="#2a5490" stroke-width="0.7"/><path d="M5,7 L7.5,8.5 L10,7 V10 L7.5,11.5 L5,10Z" fill="#fff"/></svg>
<svg style="left:477px;top:734px" width="13" height="16" viewBox="0 0 13 16"><path d="M3,7 V4 a4,4 0 0 1 8,0 V5" fill="none" stroke="#6a88b0" stroke-width="1.4"/><rect x="0.5" y="7" width="12" height="8.5" rx="1.5" fill="#9a9a9a" stroke="#6a88b0" stroke-width="1"/><rect x="5.5" y="9.5" width="2" height="3.5" fill="#fff"/></svg>
<svg style="left:391px;top:756px" width="16" height="12" viewBox="0 0 16 12"><path d="M0.5,6 H3 M13,6 H15.5" stroke="#2a5490" stroke-width="1.5"/><path d="M2.5,1 L13.5,11 V1 L2.5,11Z" fill="#e4e9f0" stroke="#2a5490" stroke-width="1.2" stroke-linejoin="round"/></svg>
<svg style="left:419px;top:756px" width="17" height="15" viewBox="0 0 17 15"><path d="M3,9 H13 L16,13.5 H6Z" fill="#d4d4d4"/><text x="-0.5" y="9.5" font-size="12" font-weight="bold" font-family="Liberation Sans" fill="#2a5490" stroke="#2a5490" stroke-width="0.6" letter-spacing="-0.6">3D</text></svg>
<svg style="left:448px;top:754px" width="15" height="16" viewBox="0 0 15 16"><path d="M7.5,0.5 L14.5,4 V12 L7.5,15.5 L0.5,12 V4Z" fill="#9aa0aa" stroke="#2a5490" stroke-width="1.2"/><path d="M0.5,4 L7.5,8 L14.5,4 M7.5,8 V15.5 M4,2.3 L11,6 M11,2.3 L4,6 M0.5,8 L7.5,12 L14.5,8 M4,6 V14 M11,6 V14" fill="none" stroke="#2a5490" stroke-width="0.7"/><path d="M5,7 L7.5,8.5 L10,7 V10 L7.5,11.5 L5,10Z" fill="#fff"/></svg>
<svg style="left:477px;top:754px" width="13" height="16" viewBox="0 0 13 16"><path d="M3,7 V4 a4,4 0 0 1 8,0 V5" fill="none" stroke="#6a88b0" stroke-width="1.4"/><rect x="0.5" y="7" width="12" height="8.5" rx="1.5" fill="#9a9a9a" stroke="#6a88b0" stroke-width="1"/><rect x="5.5" y="9.5" width="2" height="3.5" fill="#fff"/></svg>
<svg style="left:391px;top:776px" width="16" height="12" viewBox="0 0 16 12"><path d="M0.5,6 H3 M13,6 H15.5" stroke="#2a5490" stroke-width="1.5"/><path d="M2.5,1 L13.5,11 V1 L2.5,11Z" fill="#e4e9f0" stroke="#2a5490" stroke-width="1.2" stroke-linejoin="round"/></svg>
<svg style="left:419px;top:776px" width="17" height="15" viewBox="0 0 17 15"><path d="M3,9 H13 L16,13.5 H6Z" fill="#d4d4d4"/><text x="-0.5" y="9.5" font-size="12" font-weight="bold" font-family="Liberation Sans" fill="#2a5490" stroke="#2a5490" stroke-width="0.6" letter-spacing="-0.6">3D</text></svg>
<svg style="left:448px;top:774px" width="15" height="16" viewBox="0 0 15 16"><path d="M7.5,0.5 L14.5,4 V12 L7.5,15.5 L0.5,12 V4Z" fill="#9aa0aa" stroke="#2a5490" stroke-width="1.2"/><path d="M0.5,4 L7.5,8 L14.5,4 M7.5,8 V15.5 M4,2.3 L11,6 M11,2.3 L4,6 M0.5,8 L7.5,12 L14.5,8 M4,6 V14 M11,6 V14" fill="none" stroke="#2a5490" stroke-width="0.7"/><path d="M5,7 L7.5,8.5 L10,7 V10 L7.5,11.5 L5,10Z" fill="#fff"/></svg>
<svg style="left:477px;top:774px" width="13" height="16" viewBox="0 0 13 16"><path d="M3,7 V4 a4,4 0 0 1 8,0 V5" fill="none" stroke="#6a88b0" stroke-width="1.4"/><rect x="0.5" y="7" width="12" height="8.5" rx="1.5" fill="#9a9a9a" stroke="#6a88b0" stroke-width="1"/><rect x="5.5" y="9.5" width="2" height="3.5" fill="#fff"/></svg>
<svg style="left:391px;top:796px" width="16" height="12" viewBox="0 0 16 12"><path d="M0.5,6 H3 M13,6 H15.5" stroke="#2a5490" stroke-width="1.5"/><path d="M2.5,1 L13.5,11 V1 L2.5,11Z" fill="#e4e9f0" stroke="#2a5490" stroke-width="1.2" stroke-linejoin="round"/></svg>
<svg style="left:419px;top:796px" width="17" height="15" viewBox="0 0 17 15"><path d="M3,9 H13 L16,13.5 H6Z" fill="#d4d4d4"/><text x="-0.5" y="9.5" font-size="12" font-weight="bold" font-family="Liberation Sans" fill="#2a5490" stroke="#2a5490" stroke-width="0.6" letter-spacing="-0.6">3D</text></svg>
<svg style="left:448px;top:794px" width="15" height="16" viewBox="0 0 15 16"><path d="M7.5,0.5 L14.5,4 V12 L7.5,15.5 L0.5,12 V4Z" fill="#9aa0aa" stroke="#2a5490" stroke-width="1.2"/><path d="M0.5,4 L7.5,8 L14.5,4 M7.5,8 V15.5 M4,2.3 L11,6 M11,2.3 L4,6 M0.5,8 L7.5,12 L14.5,8 M4,6 V14 M11,6 V14" fill="none" stroke="#2a5490" stroke-width="0.7"/><path d="M5,7 L7.5,8.5 L10,7 V10 L7.5,11.5 L5,10Z" fill="#fff"/></svg>
<svg style="left:477px;top:794px" width="13" height="16" viewBox="0 0 13 16"><path d="M3,7 V4 a4,4 0 0 1 8,0 V5" fill="none" stroke="#6a88b0" stroke-width="1.4"/><rect x="0.5" y="7" width="12" height="8.5" rx="1.5" fill="#9a9a9a" stroke="#6a88b0" stroke-width="1"/><rect x="5.5" y="9.5" width="2" height="3.5" fill="#fff"/></svg>
<svg style="left:391px;top:816px" width="16" height="12" viewBox="0 0 16 12"><path d="M0.5,6 H3 M13,6 H15.5" stroke="#2a5490" stroke-width="1.5"/><path d="M2.5,1 L13.5,11 V1 L2.5,11Z" fill="#e4e9f0" stroke="#2a5490" stroke-width="1.2" stroke-linejoin="round"/></svg>
<svg style="left:419px;top:816px" width="17" height="15" viewBox="0 0 17 15"><path d="M3,9 H13 L16,13.5 H6Z" fill="#d4d4d4"/><text x="-0.5" y="9.5" font-size="12" font-weight="bold" font-family="Liberation Sans" fill="#2a5490" stroke="#2a5490" stroke-width="0.6" letter-spacing="-0.6">3D</text></svg>
<svg style="left:448px;top:814px" width="15" height="16" viewBox="0 0 15 16"><path d="M7.5,0.5 L14.5,4 V12 L7.5,15.5 L0.5,12 V4Z" fill="#9aa0aa" stroke="#2a5490" stroke-width="1.2"/><path d="M0.5,4 L7.5,8 L14.5,4 M7.5,8 V15.5 M4,2.3 L11,6 M11,2.3 L4,6 M0.5,8 L7.5,12 L14.5,8 M4,6 V14 M11,6 V14" fill="none" stroke="#2a5490" stroke-width="0.7"/><path d="M5,7 L7.5,8.5 L10,7 V10 L7.5,11.5 L5,10Z" fill="#fff"/></svg>
<svg style="left:477px;top:814px" width="13" height="16" viewBox="0 0 13 16"><path d="M3,7 V4 a4,4 0 0 1 8,0 V5" fill="none" stroke="#6a88b0" stroke-width="1.4"/><rect x="0.5" y="7" width="12" height="8.5" rx="1.5" fill="#9a9a9a" stroke="#6a88b0" stroke-width="1"/><rect x="5.5" y="9.5" width="2" height="3.5" fill="#fff"/></svg>
<svg style="left:391px;top:836px" width="16" height="12" viewBox="0 0 16 12"><path d="M0.5,6 H3 M13,6 H15.5" stroke="#2a5490" stroke-width="1.5"/><path d="M2.5,1 L13.5,11 V1 L2.5,11Z" fill="#e4e9f0" stroke="#2a5490" stroke-width="1.2" stroke-linejoin="round"/></svg>
<svg style="left:419px;top:836px" width="17" height="15" viewBox="0 0 17 15"><path d="M3,9 H13 L16,13.5 H6Z" fill="#d4d4d4"/><text x="-0.5" y="9.5" font-size="12" font-weight="bold" font-family="Liberation Sans" fill="#2a5490" stroke="#2a5490" stroke-width="0.6" letter-spacing="-0.6">3D</text></svg>
<svg style="left:448px;top:834px" width="15" height="16" viewBox="0 0 15 16"><path d="M7.5,0.5 L14.5,4 V12 L7.5,15.5 L0.5,12 V4Z" fill="#9aa0aa" stroke="#2a5490" stroke-width="1.2"/><path d="M0.5,4 L7.5,8 L14.5,4 M7.5,8 V15.5 M4,2.3 L11,6 M11,2.3 L4,6 M0.5,8 L7.5,12 L14.5,8 M4,6 V14 M11,6 V14" fill="none" stroke="#2a5490" stroke-width="0.7"/><path d="M5,7 L7.5,8.5 L10,7 V10 L7.5,11.5 L5,10Z" fill="#fff"/></svg>
<svg style="left:477px;top:834px" width="13" height="16" viewBox="0 0 13 16"><path d="M3,7 V4 a4,4 0 0 1 8,0 V5" fill="none" stroke="#6a88b0" stroke-width="1.4"/><rect x="0.5" y="7" width="12" height="8.5" rx="1.5" fill="#9a9a9a" stroke="#6a88b0" stroke-width="1"/><rect x="5.5" y="9.5" width="2" height="3.5" fill="#fff"/></svg>
<svg style="left:391px;top:856px" width="16" height="12" viewBox="0 0 16 12"><path d="M0.5,6 H3 M13,6 H15.5" stroke="#2a5490" stroke-width="1.5"/><path d="M2.5,1 L13.5,11 V1 L2.5,11Z" fill="#e4e9f0" stroke="#2a5490" stroke-width="1.2" stroke-linejoin="round"/></svg>
<svg style="left:419px;top:856px" width="17" height="15" viewBox="0 0 17 15"><path d="M3,9 H13 L16,13.5 H6Z" fill="#d4d4d4"/><text x="-0.5" y="9.5" font-size="12" font-weight="bold" font-family="Liberation Sans" fill="#2a5490" stroke="#2a5490" stroke-width="0.6" letter-spacing="-0.6">3D</text></svg>
<svg style="left:448px;top:854px" width="15" height="16" viewBox="0 0 15 16"><path d="M7.5,0.5 L14.5,4 V12 L7.5,15.5 L0.5,12 V4Z" fill="#9aa0aa" stroke="#2a5490" stroke-width="1.2"/><path d="M0.5,4 L7.5,8 L14.5,4 M7.5,8 V15.5 M4,2.3 L11,6 M11,2.3 L4,6 M0.5,8 L7.5,12 L14.5,8 M4,6 V14 M11,6 V14" fill="none" stroke="#2a5490" stroke-width="0.7"/><path d="M5,7 L7.5,8.5 L10,7 V10 L7.5,11.5 L5,10Z" fill="#fff"/></svg>
<svg style="left:477px;top:854px" width="13" height="16" viewBox="0 0 13 16"><path d="M3,7 V4 a4,4 0 0 1 8,0 V5" fill="none" stroke="#6a88b0" stroke-width="1.4"/><rect x="0.5" y="7" width="12" height="8.5" rx="1.5" fill="#9a9a9a" stroke="#6a88b0" stroke-width="1"/><rect x="5.5" y="9.5" width="2" height="3.5" fill="#fff"/></svg>
<svg style="left:391px;top:876px" width="16" height="12" viewBox="0 0 16 12"><path d="M0.5,6 H3 M13,6 H15.5" stroke="#2a5490" stroke-width="1.5"/><path d="M2.5,1 L13.5,11 V1 L2.5,11Z" fill="#e4e9f0" stroke="#2a5490" stroke-width="1.2" stroke-linejoin="round"/></svg>
<svg style="left:419px;top:876px" width="17" height="15" viewBox="0 0 17 15"><path d="M3,9 H13 L16,13.5 H6Z" fill="#d4d4d4"/><text x="-0.5" y="9.5" font-size="12" font-weight="bold" font-family="Liberation Sans" fill="#2a5490" stroke="#2a5490" stroke-width="0.6" letter-spacing="-0.6">3D</text></svg>
<svg style="left:448px;top:874px" width="15" height="16" viewBox="0 0 15 16"><path d="M7.5,0.5 L14.5,4 V12 L7.5,15.5 L0.5,12 V4Z" fill="#9aa0aa" stroke="#2a5490" stroke-width="1.2"/><path d="M0.5,4 L7.5,8 L14.5,4 M7.5,8 V15.5 M4,2.3 L11,6 M11,2.3 L4,6 M0.5,8 L7.5,12 L14.5,8 M4,6 V14 M11,6 V14" fill="none" stroke="#2a5490" stroke-width="0.7"/><path d="M5,7 L7.5,8.5 L10,7 V10 L7.5,11.5 L5,10Z" fill="#fff"/></svg>
<svg style="left:477px;top:874px" width="13" height="16" viewBox="0 0 13 16"><path d="M3,7 V4 a4,4 0 0 1 8,0 V5" fill="none" stroke="#6a88b0" stroke-width="1.4"/><rect x="0.5" y="7" width="12" height="8.5" rx="1.5" fill="#9a9a9a" stroke="#6a88b0" stroke-width="1"/><rect x="5.5" y="9.5" width="2" height="3.5" fill="#fff"/></svg>
<svg style="left:391px;top:896px" width="16" height="12" viewBox="0 0 16 12"><path d="M0.5,6 H3 M13,6 H15.5" stroke="#2a5490" stroke-width="1.5"/><path d="M2.5,1 L13.5,11 V1 L2.5,11Z" fill="#e4e9f0" stroke="#2a5490" stroke-width="1.2" stroke-linejoin="round"/></svg>
<svg style="left:419px;top:896px" width="17" height="15" viewBox="0 0 17 15"><path d="M3,9 H13 L16,13.5 H6Z" fill="#d4d4d4"/><text x="-0.5" y="9.5" font-size="12" font-weight="bold" font-family="Liberation Sans" fill="#2a5490" stroke="#2a5490" stroke-width="0.6" letter-spacing="-0.6">3D</text></svg>
<svg style="left:448px;top:894px" width="15" height="16" viewBox="0 0 15 16"><path d="M7.5,0.5 L14.5,4 V12 L7.5,15.5 L0.5,12 V4Z" fill="#9aa0aa" stroke="#2a5490" stroke-width="1.2"/><path d="M0.5,4 L7.5,8 L14.5,4 M7.5,8 V15.5 M4,2.3 L11,6 M11,2.3 L4,6 M0.5,8 L7.5,12 L14.5,8 M4,6 V14 M11,6 V14" fill="none" stroke="#2a5490" stroke-width="0.7"/><path d="M5,7 L7.5,8.5 L10,7 V10 L7.5,11.5 L5,10Z" fill="#fff"/></svg>
<svg style="left:477px;top:894px" width="13" height="16" viewBox="0 0 13 16"><path d="M3,7 V4 a4,4 0 0 1 8,0 V5" fill="none" stroke="#6a88b0" stroke-width="1.4"/><rect x="0.5" y="7" width="12" height="8.5" rx="1.5" fill="#9a9a9a" stroke="#6a88b0" stroke-width="1"/><rect x="5.5" y="9.5" width="2" height="3.5" fill="#fff"/></svg>
<svg style="left:391px;top:916px" width="16" height="12" viewBox="0 0 16 12"><path d="M0.5,6 H3 M13,6 H15.5" stroke="#2a5490" stroke-width="1.5"/><path d="M2.5,1 L13.5,11 V1 L2.5,11Z" fill="#e4e9f0" stroke="#2a5490" stroke-width="1.2" stroke-linejoin="round"/></svg>
<svg style="left:419px;top:916px" width="17" height="15" viewBox="0 0 17 15"><path d="M3,9 H13 L16,13.5 H6Z" fill="#d4d4d4"/><text x="-0.5" y="9.5" font-size="12" font-weight="bold" font-family="Liberation Sans" fill="#2a5490" stroke="#2a5490" stroke-width="0.6" letter-spacing="-0.6">3D</text></svg>
<svg style="left:448px;top:914px" width="15" height="16" viewBox="0 0 15 16"><path d="M7.5,0.5 L14.5,4 V12 L7.5,15.5 L0.5,12 V4Z" fill="#9aa0aa" stroke="#2a5490" stroke-width="1.2"/><path d="M0.5,4 L7.5,8 L14.5,4 M7.5,8 V15.5 M4,2.3 L11,6 M11,2.3 L4,6 M0.5,8 L7.5,12 L14.5,8 M4,6 V14 M11,6 V14" fill="none" stroke="#2a5490" stroke-width="0.7"/><path d="M5,7 L7.5,8.5 L10,7 V10 L7.5,11.5 L5,10Z" fill="#fff"/></svg>
<svg style="left:477px;top:914px" width="13" height="16" viewBox="0 0 13 16"><path d="M3,7 V4 a4,4 0 0 1 8,0 V5" fill="none" stroke="#6a88b0" stroke-width="1.4"/><rect x="0.5" y="7" width="12" height="8.5" rx="1.5" fill="#9a9a9a" stroke="#6a88b0" stroke-width="1"/><rect x="5.5" y="9.5" width="2" height="3.5" fill="#fff"/></svg>
<svg style="left:391px;top:936px" width="16" height="12" viewBox="0 0 16 12"><path d="M0.5,6 H3 M13,6 H15.5" stroke="#2a5490" stroke-width="1.5"/><path d="M2.5,1 L13.5,11 V1 L2.5,11Z" fill="#e4e9f0" stroke="#2a5490" stroke-width="1.2" stroke-linejoin="round"/></svg>
<svg style="left:419px;top:936px" width="17" height="15" viewBox="0 0 17 15"><path d="M3,9 H13 L16,13.5 H6Z" fill="#d4d4d4"/><text x="-0.5" y="9.5" font-size="12" font-weight="bold" font-family="Liberation Sans" fill="#2a5490" stroke="#2a5490" stroke-width="0.6" letter-spacing="-0.6">3D</text></svg>
<svg style="left:448px;top:934px" width="15" height="16" viewBox="0 0 15 16"><path d="M7.5,0.5 L14.5,4 V12 L7.5,15.5 L0.5,12 V4Z" fill="#9aa0aa" stroke="#2a5490" stroke-width="1.2"/><path d="M0.5,4 L7.5,8 L14.5,4 M7.5,8 V15.5 M4,2.3 L11,6 M11,2.3 L4,6 M0.5,8 L7.5,12 L14.5,8 M4,6 V14 M11,6 V14" fill="none" stroke="#2a5490" stroke-width="0.7"/><path d="M5,7 L7.5,8.5 L10,7 V10 L7.5,11.5 L5,10Z" fill="#fff"/></svg>
<svg style="left:477px;top:934px" width="13" height="16" viewBox="0 0 13 16"><path d="M3,7 V4 a4,4 0 0 1 8,0 V5" fill="none" stroke="#6a88b0" stroke-width="1.4"/><rect x="0.5" y="7" width="12" height="8.5" rx="1.5" fill="#9a9a9a" stroke="#6a88b0" stroke-width="1"/><rect x="5.5" y="9.5" width="2" height="3.5" fill="#fff"/></svg>
<svg style="left:25px;top:474px" width="16" height="16" viewBox="0 0 16 16"><path d="M1,9 L8,13 L15,9 V11 L8,15 L1,11Z" fill="#2a5490"/><path d="M1,6 L8,10 L15,6 V8 L8,12 L1,8Z" fill="#6a8ab8"/><path d="M1,5 L8,1 L15,5 L8,9Z" fill="#fff" stroke="#2a5490" stroke-width="1.2"/><path d="M1,9 L8,13 L15,9" fill="none" stroke="#2a5490" stroke-width="1.2"/></svg>
<svg style="left:25px;top:574px" width="16" height="16" viewBox="0 0 16 16"><path d="M1,9 L8,13 L15,9 V11 L8,15 L1,11Z" fill="#2a5490"/><path d="M1,6 L8,10 L15,6 V8 L8,12 L1,8Z" fill="#6a8ab8"/><path d="M1,5 L8,1 L15,5 L8,9Z" fill="#fff" stroke="#2a5490" stroke-width="1.2"/><path d="M1,9 L8,13 L15,9" fill="none" stroke="#2a5490" stroke-width="1.2"/></svg>
<svg style="left:25px;top:714px" width="16" height="16" viewBox="0 0 16 16"><path d="M1,9 L8,13 L15,9 V11 L8,15 L1,11Z" fill="#2a5490"/><path d="M1,6 L8,10 L15,6 V8 L8,12 L1,8Z" fill="#6a8ab8"/><path d="M1,5 L8,1 L15,5 L8,9Z" fill="#fff" stroke="#2a5490" stroke-width="1.2"/><path d="M1,9 L8,13 L15,9" fill="none" stroke="#2a5490" stroke-width="1.2"/></svg>
<div class="a" style="left:530px;top:575px;width:2px;height:13px;border-left:1px dotted #999"></div>

<div class="a" style="left:533px;top:160px;width:1387px;height:20px;background:#d9d9d9"></div>
<div class="t" style="left:536px;top:163px">Work area</div>
<div class="a" style="left:533px;top:210px;width:1387px;height:793px;background:#fff"></div>

<div class="a" style="left:1766px;top:184px;width:1px;height:22px;background:#b8b8b8"></div>
<div class="a" style="left:1891px;top:184px;width:1px;height:22px;background:#b8b8b8"></div>
<svg style="left:1672px;top:188px" width="15" height="15" viewBox="0 0 15 15"><path d="M8,1 V8 L1,14 M8,8 L15,12" fill="none" stroke="#4a7a90" stroke-width="1.3"/></svg>
<svg style="left:1696px;top:188px" width="15" height="15" viewBox="0 0 15 15"><path d="M1,5 L5,1 H14 V10 L10,14 H1Z" fill="#a8d4ee" stroke="#111" stroke-width="1.2"/><path d="M1,5 H10 V14 M10,5 L14,1" fill="none" stroke="#111" stroke-width="1.2"/></svg>
<svg style="left:1719px;top:189px" width="17" height="14" viewBox="0 0 17 14"><circle cx="9" cy="5" r="4" fill="#111"/><path d="M5,6 Q0,8 2,10 Q6,13 13,11 Q17,9 14,7" fill="none" stroke="#111" stroke-width="1.2"/><path d="M10,10 L13,13" stroke="#111"/></svg>
<svg style="left:1744px;top:188px" width="17" height="15" viewBox="0 0 17 15"><circle cx="8.5" cy="2.5" r="2" fill="none" stroke="#111"/><path d="M8.5,4 V14" stroke="#666" stroke-width="1.8"/><ellipse cx="8.5" cy="9" rx="7.5" ry="3" fill="none" stroke="#111" stroke-width="1.2"/></svg>
<svg style="left:1774px;top:188px" width="14" height="15" viewBox="0 0 14 15"><rect x="1" y="1" width="6" height="13" fill="#a8d4ee" stroke="#111"/><rect x="7" y="1" width="6" height="13" fill="#f4b8b8" stroke="#e00" stroke-width="1.2"/><path d="M7,0 V15" stroke="#111" stroke-dasharray="1.5,1"/></svg>
<svg style="left:1798px;top:188px" width="15" height="15" viewBox="0 0 15 15"><rect x="1" y="1" width="13" height="13" fill="#a8d4ee" stroke="#111"/><path d="M1,1 H14 L1,14Z" fill="#6aee6a"/><path d="M0,15 L15,0" stroke="#111" stroke-width="1.2"/><rect x="1" y="1" width="13" height="13" fill="none" stroke="#111"/></svg>
<svg style="left:1822px;top:189px" width="15" height="13" viewBox="0 0 15 13"><rect x="1" y="1" width="13" height="12" fill="#a8d4ee" stroke="#111"/><rect x="1" y="1" width="13" height="5" fill="#c8c8f8"/><path d="M0,7 H15" stroke="#111" stroke-dasharray="1.5,1"/><rect x="1" y="1" width="13" height="12" fill="none" stroke="#111"/></svg>
<svg style="left:1846px;top:187px" width="15" height="16" viewBox="0 0 15 16"><path d="M7.5,1 L14,4 V12 L7.5,15 L1,12 V4Z" fill="#a8d4ee" stroke="#666" stroke-width="1.2"/><path d="M1,4 L7.5,7 L14,4 L7.5,1Z" fill="#f4b8b8"/><path d="M1,8 L7.5,11 V7 L1,4Z" fill="#c8b8e8"/><path d="M14,8 L7.5,11 V7 L14,4Z" fill="#7ac04a"/></svg>
<svg style="left:1870px;top:188px" width="17" height="15" viewBox="0 0 17 15"><path d="M1,8 Q8,0 16,8 Q8,15 1,8Z" fill="#111"/><circle cx="8.5" cy="8" r="2" fill="#888"/><path d="M3,14 L15,1" stroke="#111" stroke-width="1.2"/></svg>
<svg style="left:1897px;top:187px" width="18" height="17" viewBox="0 0 18 17"><text x="0" y="8" font-size="8.5" font-weight="bold" font-family="Liberation Sans" fill="#111">3D</text><polygon points="16.50,12.00 16.39,13.07 14.96,13.64 14.57,14.38 14.89,15.89 14.06,16.57 12.64,15.96 11.84,16.21 11.00,17.50 9.93,17.39 9.36,15.96 8.62,15.57 7.11,15.89 6.43,15.06 7.04,13.64 6.79,12.84 5.50,12.00 5.61,10.93 7.04,10.36 7.43,9.62 7.11,8.11 7.94,7.43 9.36,8.04 10.16,7.79 11.00,6.50 12.07,6.61 12.64,8.04 13.38,8.43 14.89,8.11 15.57,8.94 14.96,10.36 15.21,11.16" fill="#fff" stroke="#888" stroke-width="1"/></svg>
<svg style="left:540px;top:890px" width="70" height="90" viewBox="0 0 70 90"><path d="M18.4,58 V30" stroke="#0000e0" stroke-width="1.8"/><path d="M14.5,34 L18.4,22.5 L22.3,34Z" fill="#0000d8"/><path d="M18.4,58 L43,45" stroke="#10e010" stroke-width="1.6"/><path d="M40,40.5 L49.3,40 L44,48Z" fill="#10c010"/><circle cx="42" cy="45" r="2" fill="#107010"/><path d="M18.4,58 L42,72" stroke="#a00000" stroke-width="1.8"/><path d="M38.5,75.5 L48.6,75.6 L43,68Z" fill="#a00"/><text x="13.5" y="18" font-size="12.5" font-weight="bold" fill="#0000e0" font-family="Liberation Sans">Z</text><text x="52" y="39.6" font-size="12.5" font-weight="bold" fill="#10e010" font-family="Liberation Sans">Y</text><text x="52" y="83" font-size="12.5" font-weight="bold" fill="#f01010" font-family="Liberation Sans">X</text></svg>
<svg style="left:0;top:0" width="1920" height="1040" viewBox="0 0 1920 1040"><polygon points="931.5,833 1255,643 1521,795 1284,931 1180,873 1090,925" fill="none" stroke="#8a8a8a" stroke-width="0.8" /><polygon points="947,831.5 1255,651 1506,797 1284,925 1180,866 1091,915" fill="none" stroke="#8a8a8a" stroke-width="0.8" /><polyline points="1215.6,754.5 1395.4,859" fill="none" stroke="#777" stroke-width="1.4" stroke-linejoin="round" /><polyline points="1221,887.4 1300,840.5 1330,822" fill="none" stroke="#888" stroke-width="1.3" stroke-linejoin="round" /><polyline points="1170,718 1200,735" fill="none" stroke="#999" stroke-width="0.8" stroke-linejoin="round" /><polygon points="1127.7,728.6 1160,710 1239.8,741.3 1194.3,767.2" fill="none" stroke="#888" stroke-width="1" /><polygon points="1133,728.6 1160,713 1234,741.3 1194.3,763.5" fill="none" stroke="#aaa" stroke-width="0.7" /><polygon points="1166.9,835.5 1199.4,816.7 1232.6,835.5 1199.4,854.2" fill="none" stroke="#888" stroke-width="0.8" /><polyline points="1130,849.9 1196.5,812.4 1242.7,836.2 1188.5,868.6 1221,887.4" fill="none" stroke="#888" stroke-width="0.8" stroke-linejoin="round" /><polyline points="1130,849.9 1167.6,872.3" fill="none" stroke="#888" stroke-width="0.8" stroke-linejoin="round" /><polygon points="1141.6,849.9 1161.8,839 1193.6,857.8 1173.4,868.6" fill="none" stroke="#888" stroke-width="0.8" /><polygon points="1075.9,757.7 1122.4,785.7 1173.2,755.6 1127.7,728.6" fill="none" stroke="#888" stroke-width="0.9" /><polyline points="1081.0666666666668,760.8111111111111 1132.7555555555557,731.6" fill="none" stroke="#999" stroke-width="0.6" stroke-linejoin="round" /><polyline points="1086.2333333333333,763.9222222222222 1137.8111111111111,734.6" fill="none" stroke="#999" stroke-width="0.6" stroke-linejoin="round" /><polyline points="1091.4,767.0333333333334 1142.8666666666668,737.6" fill="none" stroke="#999" stroke-width="0.6" stroke-linejoin="round" /><polyline points="1096.5666666666668,770.1444444444445 1147.9222222222222,740.6" fill="none" stroke="#999" stroke-width="0.6" stroke-linejoin="round" /><polyline points="1101.7333333333333,773.2555555555556 1152.9777777777779,743.6" fill="none" stroke="#999" stroke-width="0.6" stroke-linejoin="round" /><polyline points="1106.9,776.3666666666667 1158.0333333333333,746.6" fill="none" stroke="#999" stroke-width="0.6" stroke-linejoin="round" /><polyline points="1112.0666666666668,779.4777777777779 1163.088888888889,749.6" fill="none" stroke="#999" stroke-width="0.6" stroke-linejoin="round" /><polyline points="1117.2333333333333,782.588888888889 1168.1444444444444,752.6" fill="none" stroke="#999" stroke-width="0.6" stroke-linejoin="round" /><polyline points="1088.8500000000001,750.4250000000001 1135.1000000000001,778.1750000000001" fill="none" stroke="#999" stroke-width="0.6" stroke-linejoin="round" /><polyline points="1101.8000000000002,743.1500000000001 1147.8000000000002,770.6500000000001" fill="none" stroke="#999" stroke-width="0.6" stroke-linejoin="round" /><polyline points="1114.75,735.875 1160.5,763.125" fill="none" stroke="#999" stroke-width="0.6" stroke-linejoin="round" /><polyline points="1076,757 1100,755 1120,753 1127,729" fill="none" stroke="#888" stroke-width="0.7" stroke-linejoin="round" /><polyline points="998,867.5 1038,888" fill="none" stroke="#c8c0a0" stroke-width="0.8" stroke-linejoin="round" /><polyline points="1255,651 1290,671" fill="none" stroke="#c8c0a0" stroke-width="0.8" stroke-linejoin="round" /><polyline points="1340,690 1420,737" fill="none" stroke="#c8c0a0" stroke-width="0.8" stroke-linejoin="round" /><polyline points="1420,848 1458,826" fill="none" stroke="#c8c0a0" stroke-width="0.8" stroke-linejoin="round" /><polygon points="983,822 1027,796 1041,804 997,829" fill="#a4a4a4" stroke="#888" stroke-width="0.9" /><polyline points="987.4,819.4 1001.4,826.5" fill="none" stroke="#e0e0e0" stroke-width="0.6" stroke-linejoin="round" /><polyline points="991.8,816.8 1005.8,824.0" fill="none" stroke="#e0e0e0" stroke-width="0.6" stroke-linejoin="round" /><polyline points="996.2,814.2 1010.2,821.5" fill="none" stroke="#e0e0e0" stroke-width="0.6" stroke-linejoin="round" /><polyline points="1000.6,811.6 1014.6,819.0" fill="none" stroke="#e0e0e0" stroke-width="0.6" stroke-linejoin="round" /><polyline points="1005.0,809.0 1019.0,816.5" fill="none" stroke="#e0e0e0" stroke-width="0.6" stroke-linejoin="round" /><polyline points="1009.4,806.4 1023.4,814.0" fill="none" stroke="#e0e0e0" stroke-width="0.6" stroke-linejoin="round" /><polyline points="1013.8,803.8 1027.8,811.5" fill="none" stroke="#e0e0e0" stroke-width="0.6" stroke-linejoin="round" /><polyline points="1018.2,801.2 1032.2,809.0" fill="none" stroke="#e0e0e0" stroke-width="0.6" stroke-linejoin="round" /><polyline points="1022.6,798.6 1036.6,806.5" fill="none" stroke="#e0e0e0" stroke-width="0.6" stroke-linejoin="round" /><polyline points="986.5,823.75 1030.5,798.0" fill="none" stroke="#888" stroke-width="0.7" stroke-linejoin="round" /><polyline points="990.0,825.5 1034.0,800.0" fill="none" stroke="#888" stroke-width="0.7" stroke-linejoin="round" /><polyline points="993.5,827.25 1037.5,802.0" fill="none" stroke="#888" stroke-width="0.7" stroke-linejoin="round" /><polygon points="1023,842 1067,818 1081,826 1037,852" fill="#a4a4a4" stroke="#888" stroke-width="0.9" /><polyline points="1027.4,839.6 1041.4,849.4" fill="none" stroke="#e0e0e0" stroke-width="0.6" stroke-linejoin="round" /><polyline points="1031.8,837.2 1045.8,846.8" fill="none" stroke="#e0e0e0" stroke-width="0.6" stroke-linejoin="round" /><polyline points="1036.2,834.8 1050.2,844.2" fill="none" stroke="#e0e0e0" stroke-width="0.6" stroke-linejoin="round" /><polyline points="1040.6,832.4 1054.6,841.6" fill="none" stroke="#e0e0e0" stroke-width="0.6" stroke-linejoin="round" /><polyline points="1045.0,830.0 1059.0,839.0" fill="none" stroke="#e0e0e0" stroke-width="0.6" stroke-linejoin="round" /><polyline points="1049.4,827.6 1063.4,836.4" fill="none" stroke="#e0e0e0" stroke-width="0.6" stroke-linejoin="round" /><polyline points="1053.8,825.2 1067.8,833.8" fill="none" stroke="#e0e0e0" stroke-width="0.6" stroke-linejoin="round" /><polyline points="1058.2,822.8 1072.2,831.2" fill="none" stroke="#e0e0e0" stroke-width="0.6" stroke-linejoin="round" /><polyline points="1062.6,820.4 1076.6,828.6" fill="none" stroke="#e0e0e0" stroke-width="0.6" stroke-linejoin="round" /><polyline points="1026.5,844.5 1070.5,820.0" fill="none" stroke="#888" stroke-width="0.7" stroke-linejoin="round" /><polyline points="1030.0,847.0 1074.0,822.0" fill="none" stroke="#888" stroke-width="0.7" stroke-linejoin="round" /><polyline points="1033.5,849.5 1077.5,824.0" fill="none" stroke="#888" stroke-width="0.7" stroke-linejoin="round" /><ellipse cx="1054.5" cy="800.7" rx="8.5" ry="5.2" fill="#8a8a8a" stroke="#999" stroke-width="1"/><ellipse cx="1071.5" cy="810.3" rx="8.5" ry="5.2" fill="#999" stroke="#999" stroke-width="1"/><path d="M1343,726.5 l2,-4 h6 l2,4" fill="#fff" stroke="#666" stroke-width="1"/><path d="M1343,746.5 l2,4 h6 l2,-4" fill="#fff" stroke="#666" stroke-width="1"/><path d="M1334,732.5 h-9 v8 h9" fill="#fff" stroke="#666" stroke-width="1"/><path d="M1362,732.5 h9 v8 h-9" fill="#fff" stroke="#666" stroke-width="1"/><ellipse cx="1348" cy="736.5" rx="15" ry="9.5" fill="#fff" stroke="#666" stroke-width="1.1"/><path d="M1292.3,757.5 l2,-4 h6 l2,4" fill="#fff" stroke="#666" stroke-width="1"/><path d="M1292.3,777.5 l2,4 h6 l2,-4" fill="#fff" stroke="#666" stroke-width="1"/><path d="M1283.3,763.5 h-9 v8 h9" fill="#fff" stroke="#666" stroke-width="1"/><path d="M1311.3,763.5 h9 v8 h-9" fill="#fff" stroke="#666" stroke-width="1"/><ellipse cx="1297.3" cy="767.5" rx="15" ry="9.5" fill="#fff" stroke="#666" stroke-width="1.1"/><path d="M1388.8,752.6 l2,-4 h6 l2,4" fill="#fff" stroke="#666" stroke-width="1"/><path d="M1388.8,772.6 l2,4 h6 l2,-4" fill="#fff" stroke="#666" stroke-width="1"/><path d="M1379.8,758.6 h-9 v8 h9" fill="#fff" stroke="#666" stroke-width="1"/><path d="M1407.8,758.6 h9 v8 h-9" fill="#fff" stroke="#666" stroke-width="1"/><ellipse cx="1393.8" cy="762.6" rx="15" ry="9.5" fill="#fff" stroke="#666" stroke-width="1.1"/><path d="M1336.5,782 l2,-4 h6 l2,4" fill="#fff" stroke="#666" stroke-width="1"/><path d="M1336.5,802 l2,4 h6 l2,-4" fill="#fff" stroke="#666" stroke-width="1"/><path d="M1327.5,788 h-9 v8 h9" fill="#fff" stroke="#666" stroke-width="1"/><path d="M1355.5,788 h9 v8 h-9" fill="#fff" stroke="#666" stroke-width="1"/><ellipse cx="1341.5" cy="792" rx="15" ry="9.5" fill="#fff" stroke="#666" stroke-width="1.1"/><path d="M1433,778.8 l2,-4 h6 l2,4" fill="#fff" stroke="#666" stroke-width="1"/><path d="M1433,798.8 l2,4 h6 l2,-4" fill="#fff" stroke="#666" stroke-width="1"/><path d="M1424,784.8 h-9 v8 h9" fill="#fff" stroke="#666" stroke-width="1"/><path d="M1452,784.8 h9 v8 h-9" fill="#fff" stroke="#666" stroke-width="1"/><ellipse cx="1438" cy="788.8" rx="15" ry="9.5" fill="#fff" stroke="#666" stroke-width="1.1"/><path d="M1382.3,808.2 l2,-4 h6 l2,4" fill="#fff" stroke="#666" stroke-width="1"/><path d="M1382.3,828.2 l2,4 h6 l2,-4" fill="#fff" stroke="#666" stroke-width="1"/><path d="M1373.3,814.2 h-9 v8 h9" fill="#fff" stroke="#666" stroke-width="1"/><path d="M1401.3,814.2 h9 v8 h-9" fill="#fff" stroke="#666" stroke-width="1"/><ellipse cx="1387.3" cy="818.2" rx="15" ry="9.5" fill="#fff" stroke="#666" stroke-width="1.1"/><ellipse cx="1198.5" cy="726" rx="6.5" ry="4" fill="none" stroke="#888" stroke-width="1.2"/><ellipse cx="1216" cy="736.5" rx="6.5" ry="4" fill="none" stroke="#888" stroke-width="1.2"/><polyline points="1141,322 1143,326 1262.3,429.2 1263.5,498.5 1398.5,469.6" fill="none" stroke="#55737a" stroke-width="4.0" stroke-linejoin="round" /><polyline points="1141,322 1143,326 1262.3,429.2 1263.5,498.5 1398.5,469.6" fill="none" stroke="#7f9ea4" stroke-width="2.0" stroke-linejoin="round" /><polyline points="1212,401 1212.7,406 1262.3,429.2" fill="none" stroke="#55737a" stroke-width="4.0" stroke-linejoin="round" /><polyline points="1212,401 1212.7,406 1262.3,429.2" fill="none" stroke="#7f9ea4" stroke-width="2.0" stroke-linejoin="round" /><polyline points="1279,374 1279.6,378.5 1398.5,468.5" fill="none" stroke="#55737a" stroke-width="4.0" stroke-linejoin="round" /><polyline points="1279,374 1279.6,378.5 1398.5,468.5" fill="none" stroke="#7f9ea4" stroke-width="2.0" stroke-linejoin="round" /><polyline points="1278,415 1278.5,420 1398.5,560.8" fill="none" stroke="#55737a" stroke-width="4.0" stroke-linejoin="round" /><polyline points="1278,415 1278.5,420 1398.5,560.8" fill="none" stroke="#7f9ea4" stroke-width="2.0" stroke-linejoin="round" /><polyline points="1072,482 1072.7,487.1 1398.5,563" fill="none" stroke="#55737a" stroke-width="4.0" stroke-linejoin="round" /><polyline points="1072,482 1072.7,487.1 1398.5,563" fill="none" stroke="#7f9ea4" stroke-width="2.0" stroke-linejoin="round" /><polyline points="1398.5,469.6 1303.8,503" fill="none" stroke="#55737a" stroke-width="4.0" stroke-linejoin="round" /><polyline points="1398.5,469.6 1303.8,503" fill="none" stroke="#7f9ea4" stroke-width="2.0" stroke-linejoin="round" /><polyline points="1398.5,466 1398.5,862" fill="none" stroke="#4d7d5a" stroke-width="2.5" stroke-linejoin="round" /><polyline points="1401.5,470 1401.5,862" fill="none" stroke="#9cc4d0" stroke-width="2.5" stroke-linejoin="round" /><polygon points="1079.2,301.3 1126,275 1139.8,274.4 1093,312" fill="#fff" stroke="#666" stroke-width="0.9" /><polygon points="1092.7,311.9 1139.8,274.4 1166.7,290.8 1118.7,327.3" fill="#a8a8a8" stroke="#444" stroke-width="1.2" /><polyline points="1131.2,272.5 1131.2,341.7 1135,342.7 1197.5,305.2" fill="none" stroke="#8a70b0" stroke-width="1" stroke-linejoin="round" /><polyline points="1136,340 1196,305" fill="none" stroke="#999" stroke-width="2.2" stroke-linejoin="round" stroke-dasharray="1.5,1"/><polyline points="1169.6,322.5 1169.6,708" fill="none" stroke="#3c6e46" stroke-width="4.5" stroke-linejoin="round" /><polyline points="1169.6,322.5 1169.6,708" fill="none" stroke="#5f9a6a" stroke-width="2.0" stroke-linejoin="round" /><polyline points="1170,708 1130.6,772" fill="none" stroke="#3c6e46" stroke-width="4" stroke-linejoin="round" /><polyline points="1170,708 1130.6,772" fill="none" stroke="#5f9a6a" stroke-width="1.5" stroke-linejoin="round" /><polyline points="1130.6,769.4 1428,944" fill="none" stroke="#2f6a2f" stroke-width="3.4" stroke-linejoin="round" /><polyline points="1130.6,768.6 1428,943.2" fill="none" stroke="#5a9a5a" stroke-width="1.2" stroke-linejoin="round" /><path d="M1122,769 l8,-7 l10,3 l1,9 l-8,6 l-10,-3z" fill="#7ab87a" fill-opacity="0.75" stroke="#6aa06a" stroke-width="0.8"/><polyline points="1170,708 1188.4,735 1230.8,696.2 1249,661.5" fill="none" stroke="#3c7a3c" stroke-width="1.6" stroke-linejoin="round" /><polyline points="1188,734.4 1215.5,736.5" fill="none" stroke="#3c7a3c" stroke-width="1.4" stroke-linejoin="round" /><rect x="1185" y="731" width="6" height="8" fill="#8cc08c" stroke="#3c7a3c"/><path d="M1193.8,666 v32 a6.75,3.375 0 0 0 13.5,0 v-32" fill="#6a6a6a" stroke="#444" stroke-width="1"/><ellipse cx="1200.55" cy="666" rx="6.75" ry="3.375" fill="#999" stroke="#444" stroke-width="0.8"/><path d="M1181,680 v23 a6.75,3.375 0 0 0 13.5,0 v-23" fill="#707070" stroke="#444" stroke-width="1"/><ellipse cx="1187.75" cy="680" rx="6.75" ry="3.375" fill="#999" stroke="#444" stroke-width="0.8"/><polyline points="1075.8,939.6 1140.7,905 1140.7,890" fill="none" stroke="#0a14e6" stroke-width="2" stroke-linejoin="round" /><circle cx="1076" cy="939" r="3" fill="#0010b0"/><polyline points="1070,944 1078,937" fill="none" stroke="#0a14e6" stroke-width="1.5" stroke-linejoin="round" /><path d="M1135,877 l16,-9 l8,4 v14 l-16,9 l-8,-4z" fill="#0010c0" stroke="#000880" stroke-width="1"/><path d="M1135,877 l8,4 l16,-9 M1143,881 v14" fill="none" stroke="#3040ff" stroke-width="0.8"/><polyline points="1157,870 1158,821.3 1338.2,717.8 1238.2,658.8" fill="none" stroke="#0a14e6" stroke-width="2.2" stroke-linejoin="round" /><polyline points="1198.6,655 1198.6,446 1421.5,572.3 1368.5,604.9 1368.5,509" fill="none" stroke="#0a14e6" stroke-width="2.6" stroke-linejoin="round" /><polyline points="1195.8,655 1195.8,443 1416,567.5 1366,598 1366,511" fill="none" stroke="#f01010" stroke-width="2.4" stroke-linejoin="round" stroke-dasharray="6,1.5,2,1.5"/><polyline points="1192,452 1200,446" fill="none" stroke="#e81010" stroke-width="2" stroke-linejoin="round" /><polyline points="1151,510 1151,452.7 1173.4,466" fill="none" stroke="#3a3aff" stroke-width="1.1" stroke-linejoin="round" /><polyline points="1173.4,462.5 1189.6,451.5" fill="none" stroke="#ff3030" stroke-width="1.1" stroke-linejoin="round" /><polyline points="1176,466 1193.6,452.7" fill="none" stroke="#3a3aff" stroke-width="1.1" stroke-linejoin="round" /><polyline points="1180,459 1189.6,453" fill="none" stroke="#666" stroke-width="1" stroke-linejoin="round" stroke-dasharray="1.5,1"/><polyline points="1182,466.5 1200,477" fill="none" stroke="#3a3aff" stroke-width="1.1" stroke-linejoin="round" /><polyline points="1184,468 1200,474" fill="none" stroke="#ff3030" stroke-width="0.9" stroke-linejoin="round" /><polyline points="1191.3,470 1204.6,463 1204.6,519.6" fill="none" stroke="#3a3aff" stroke-width="1.1" stroke-linejoin="round" /><polyline points="1202,477 1209,480.4 1222.5,473.4 1222.5,532.3" fill="none" stroke="#3a3aff" stroke-width="1.1" stroke-linejoin="round" /><polyline points="1200,477 1215.5,468.8 1215.5,527.7" fill="none" stroke="#ff2020" stroke-width="1" stroke-linejoin="round" stroke-dasharray="5,1.5"/><polyline points="1214,470 1214,527" fill="none" stroke="#777" stroke-width="0.8" stroke-linejoin="round" stroke-dasharray="2,2"/><circle cx="1189.6" cy="451.5" r="1.8" fill="#a01010"/><circle cx="1193.6" cy="452.7" r="1.8" fill="#101080"/><polygon points="1147,514.3 1155,509 1163,514.3 1155,519.6" fill="#0010c0" stroke="#000880" stroke-width="1" /><polygon points="1188,522 1196.5,515.5 1204.6,522 1196.5,528" fill="#9060c0" stroke="#603090" stroke-width="1" /><polygon points="1206.7,532 1214.4,527 1222.5,532 1214.4,537.4" fill="#9060c0" stroke="#603090" stroke-width="1" /><polyline points="1170,518.4 1152,526.5 1152,516.7" fill="none" stroke="#3c7a3c" stroke-width="1.6" stroke-linejoin="round" /><polyline points="1170,520 1187.3,543.8 1219.6,545.5 1219.6,533.4" fill="none" stroke="#3c7a3c" stroke-width="1.6" stroke-linejoin="round" /><polyline points="1187.3,542 1201,537 1201,524" fill="none" stroke="#3c7a3c" stroke-width="1.6" stroke-linejoin="round" /><rect x="1186" y="538" width="4" height="6" fill="#8cc08c" stroke="#3c7a3c" stroke-width="0.8"/><circle cx="1189.6" cy="547.8" r="1.6" fill="#a01010"/><circle cx="1193" cy="548.5" r="1.6" fill="#101080"/><polyline points="1151,605 1151,547.7 1173.4,561" fill="none" stroke="#3a3aff" stroke-width="1.1" stroke-linejoin="round" /><polyline points="1173.4,557.5 1189.6,546.5" fill="none" stroke="#ff3030" stroke-width="1.1" stroke-linejoin="round" /><polyline points="1176,561 1193.6,547.7" fill="none" stroke="#3a3aff" stroke-width="1.1" stroke-linejoin="round" /><polyline points="1180,554 1189.6,548" fill="none" stroke="#666" stroke-width="1" stroke-linejoin="round" stroke-dasharray="1.5,1"/><polyline points="1182,561.5 1200,572" fill="none" stroke="#3a3aff" stroke-width="1.1" stroke-linejoin="round" /><polyline points="1184,563 1200,569" fill="none" stroke="#ff3030" stroke-width="0.9" stroke-linejoin="round" /><polyline points="1191.3,565 1204.6,558 1204.6,614.6" fill="none" stroke="#3a3aff" stroke-width="1.1" stroke-linejoin="round" /><polyline points="1202,572 1209,575.4 1222.5,568.4 1222.5,627.3" fill="none" stroke="#3a3aff" stroke-width="1.1" stroke-linejoin="round" /><polyline points="1200,572 1215.5,563.8 1215.5,622.7" fill="none" stroke="#ff2020" stroke-width="1" stroke-linejoin="round" stroke-dasharray="5,1.5"/><polyline points="1214,565 1214,622" fill="none" stroke="#777" stroke-width="0.8" stroke-linejoin="round" stroke-dasharray="2,2"/><circle cx="1189.6" cy="546.5" r="1.8" fill="#a01010"/><circle cx="1193.6" cy="547.7" r="1.8" fill="#101080"/><polygon points="1147,609.3 1155,604 1163,609.3 1155,614.6" fill="#0010c0" stroke="#000880" stroke-width="1" /><polygon points="1188,617 1196.5,610.5 1204.6,617 1196.5,623" fill="#9060c0" stroke="#603090" stroke-width="1" /><polygon points="1206.7,627 1214.4,622 1222.5,627 1214.4,632.4" fill="#9060c0" stroke="#603090" stroke-width="1" /><polyline points="1170,613.4 1152,621.5 1152,611.7" fill="none" stroke="#3c7a3c" stroke-width="1.6" stroke-linejoin="round" /><polyline points="1170,615 1187.3,638.8 1219.6,640.5 1219.6,628.4" fill="none" stroke="#3c7a3c" stroke-width="1.6" stroke-linejoin="round" /><polyline points="1187.3,637 1201,632 1201,619" fill="none" stroke="#3c7a3c" stroke-width="1.6" stroke-linejoin="round" /><rect x="1186" y="633" width="4" height="6" fill="#8cc08c" stroke="#3c7a3c" stroke-width="0.8"/><circle cx="1189.6" cy="642.8" r="1.6" fill="#a01010"/><circle cx="1193" cy="643.5" r="1.6" fill="#101080"/><polyline points="1150.8,702 1150.8,644 1173.6,656" fill="none" stroke="#3a3aff" stroke-width="1" stroke-linejoin="round" /><polygon points="1146.8,704.6 1154.8,700 1162.8,704.6 1154.8,709.2" fill="#0010c0" stroke="#000880" stroke-width="1" /><polyline points="1169.6,708 1153,716 1153,706" fill="none" stroke="#3c7a3c" stroke-width="1.5" stroke-linejoin="round" /><polyline points="1204.6,614.4 1251.7,586.8 1253,588 1254.4,646.7" fill="none" stroke="#3a3aff" stroke-width="1" stroke-linejoin="round" /><polyline points="1203,613 1243.6,589.5 1246.3,592 1246.3,650" fill="none" stroke="#ff2020" stroke-width="1" stroke-linejoin="round" stroke-dasharray="4,1.5"/><polyline points="1184,625 1184,690" fill="none" stroke="#3a3aff" stroke-width="1" stroke-linejoin="round" /><polyline points="1215,628 1215,700" fill="none" stroke="#3a3aff" stroke-width="1" stroke-linejoin="round" /><polyline points="1225,622 1225,668" fill="none" stroke="#3a3aff" stroke-width="1" stroke-linejoin="round" /><polyline points="1179,628 1179,702" fill="none" stroke="#ff2020" stroke-width="1.3" stroke-linejoin="round" stroke-dasharray="4,1.5"/><polyline points="1208,630 1208,705" fill="none" stroke="#ff2020" stroke-width="1" stroke-linejoin="round" stroke-dasharray="4,1.5"/><polyline points="1220,660 1220,705" fill="none" stroke="#ff2020" stroke-width="1" stroke-linejoin="round" stroke-dasharray="4,1.5"/><polyline points="1197.9,670 1197.9,710" fill="none" stroke="#ff2020" stroke-width="2" stroke-linejoin="round" stroke-dasharray="4,1.5"/><polyline points="1173.6,654 1199.2,642.7 1210,648" fill="none" stroke="#ff2020" stroke-width="2.2" stroke-linejoin="round" /><polyline points="1176,632 1190,640" fill="none" stroke="#ff2020" stroke-width="2" stroke-linejoin="round" /><polyline points="1188,652 1202,645" fill="none" stroke="#ff2020" stroke-width="2" stroke-linejoin="round" /><polyline points="1187,630 1222,611" fill="none" stroke="#3a3aff" stroke-width="1.2" stroke-linejoin="round" /><polyline points="1200,624 1222,637" fill="none" stroke="#3a3aff" stroke-width="1.2" stroke-linejoin="round" /><polygon points="1246.4,650.8 1254.4,646.3 1262.4,650.8 1254.4,655.3" fill="#9060c0" stroke="#603090" stroke-width="1" /><polygon points="1218.8,666.9 1226.8,662.4 1234.8,666.9 1226.8,671.4" fill="#9060c0" stroke="#603090" stroke-width="1" /><polygon points="1208,673.6 1216,669.1 1224,673.6 1216,678.1" fill="#9060c0" stroke="#603090" stroke-width="1" /><polygon points="1188.3,713.1 1196.3,708.6 1204.3,713.1 1196.3,717.6" fill="#9060c0" stroke="#603090" stroke-width="1" /><polygon points="1206.4,723 1214.4,718.5 1222.4,723 1214.4,727.5" fill="#9060c0" stroke="#603090" stroke-width="1" /><polyline points="1173.6,654.8 1207.3,638.6 1243.6,657.5 1239,661 1238.2,658.8" fill="none" stroke="#0a14e6" stroke-width="2.2" stroke-linejoin="round" /><polyline points="1173.6,654.8 1206,666.9 1222,658" fill="none" stroke="#0a14e6" stroke-width="2.2" stroke-linejoin="round" /><polyline points="1205.3,655 1205.3,710" fill="none" stroke="#0a14e6" stroke-width="2" stroke-linejoin="round" /><polyline points="1199.2,638.6 1199.2,655" fill="none" stroke="#0a14e6" stroke-width="2.6" stroke-linejoin="round" /><polyline points="1169.6,614.4 1188.5,644 1190,650" fill="none" stroke="#3c7a3c" stroke-width="1.5" stroke-linejoin="round" /><polyline points="1249,661.5 1231.5,695.2 1200,708" fill="none" stroke="#3c7a3c" stroke-width="1.5" stroke-linejoin="round" /><polyline points="1292.3,560.8 1292.3,502 1306,493.9 1322.3,503" fill="none" stroke="#3a3aff" stroke-width="1" stroke-linejoin="round" /><polyline points="1309.6,570 1309.6,512.3 1322.3,503" fill="none" stroke="#3a3aff" stroke-width="1" stroke-linejoin="round" /><polyline points="1322.3,503 1352.3,519.2 1363.9,510" fill="none" stroke="#3a3aff" stroke-width="1" stroke-linejoin="round" /><polyline points="1299.2,563 1299.2,505.4 1313,497 1352,517 1362,509" fill="none" stroke="#ff2020" stroke-width="1" stroke-linejoin="round" stroke-dasharray="4,1.5"/><polyline points="1315.4,575 1315.4,520 1330,510" fill="none" stroke="#ff2020" stroke-width="1" stroke-linejoin="round" stroke-dasharray="4,1.5"/><polyline points="1356,576 1356,511" fill="none" stroke="#0a14e6" stroke-width="2" stroke-linejoin="round" /><polygon points="1291.2,560.8 1299.2,556.3 1307.2,560.8 1299.2,565.3" fill="#9060c0" stroke="#603090" stroke-width="1" /><polygon points="1309.7,570 1317.7,565.5 1325.7,570 1317.7,574.5" fill="#9060c0" stroke="#603090" stroke-width="1" /><polygon points="1345.5,575.8 1353.5,571.3 1361.5,575.8 1353.5,580.3" fill="#0010c0" stroke="#000880" stroke-width="1" /><polyline points="1294.6,563 1294.6,579.2 1327,581.6 1357,574.6" fill="none" stroke="#3c7a3c" stroke-width="1.6" stroke-linejoin="round" /><polyline points="1313,572.3 1313,590.8 1327,581.6" fill="none" stroke="#3c7a3c" stroke-width="1.6" stroke-linejoin="round" /><polyline points="1357,581.6 1357,593 1396,567.7 1357,581.6" fill="none" stroke="#3c7a3c" stroke-width="1.6" stroke-linejoin="round" /><ellipse cx="1327" cy="581" rx="2.5" ry="3.5" fill="#8cc08c" stroke="#3c7a3c"/><polyline points="1398.7,862.4 1356.2,882" fill="none" stroke="#3c7a3c" stroke-width="1.8" stroke-linejoin="round" /><polyline points="1398.7,862.4 1428,875 1395,893 1447.8,931 1447.8,940" fill="none" stroke="#6e96a8" stroke-width="3" stroke-linejoin="round" /><polyline points="1398.7,862.4 1428,875 1395,893 1447.8,931 1447.8,940" fill="none" stroke="#b0d0dc" stroke-width="1.4" stroke-linejoin="round" /><path d="M1418,866.4 l10.0,-4 l10.0,4 v17 l-10.0,4 l-10.0,-4z" fill="#a8ccd8" stroke="#6e8e9a" stroke-width="1"/><path d="M1418,866.4 l10.0,4 l10.0,-4 M1428.0,870.4 v17" fill="none" stroke="#6e8e9a" stroke-width="0.7"/><path d="M1385.6,884.4 l10.0,-4 l10.0,4 v17 l-10.0,4 l-10.0,-4z" fill="#a8ccd8" stroke="#6e8e9a" stroke-width="1"/><path d="M1385.6,884.4 l10.0,4 l10.0,-4 M1395.6,888.4 v17" fill="none" stroke="#6e8e9a" stroke-width="0.7"/><path d="M1344.8,871.3 l10.5,-4 l10.5,4 v17 l-10.5,4 l-10.5,-4z" fill="#7ab87a" stroke="#4a8a4a" stroke-width="1"/><path d="M1344.8,871.3 l10.5,4 l10.5,-4 M1355.3,875.3 v17" fill="none" stroke="#4a8a4a" stroke-width="0.7"/><path d="M1369.3,899 l10.0,-4 l10.0,4 v17 l-10.0,4 l-10.0,-4z" fill="#7ab87a" stroke="#4a8a4a" stroke-width="1"/><path d="M1369.3,899 l10.0,4 l10.0,-4 M1379.3,903 v17" fill="none" stroke="#4a8a4a" stroke-width="0.7"/><path d="M1395.4,920 v45 a16.4,8 0 0 0 32.8,0 v-45" fill="#80c080" stroke="#4a8a4a" stroke-width="1"/><ellipse cx="1411.8" cy="920" rx="16.4" ry="8" fill="#90c890" stroke="#4a8a4a" stroke-width="1"/><polyline points="1380,910 1425,937" fill="none" stroke="#2b5e2b" stroke-width="3" stroke-linejoin="round" /></svg>

<div class="a" style="left:0;top:1003px;width:123px;height:19px;background:#cce4f7"></div>
<div class="t b" style="left:12px;top:1006px;color:#333;font-size:13.6px">Water Systems</div>
<div class="t g" style="left:141px;top:1007px">Solar Systems</div>
<div class="t g" style="left:261px;top:1007px">Sanitary Systems</div>
<div class="t g" style="left:393px;top:1007px">Layout</div>
<div class="t" style="left:32px;top:1024px">Select an option from the menu.</div>

<svg style="left:7px;top:1023px" width="16" height="16" viewBox="0 0 16 16"><circle cx="8" cy="8" r="7.5" fill="#1a7ac8"/><circle cx="8" cy="4.3" r="1.3" fill="#fff"/><path d="M6,7 H9 V12 H10.5 V13 H5.5 V12 H7 V8 H6Z" fill="#fff"/></svg>
</body></html>
